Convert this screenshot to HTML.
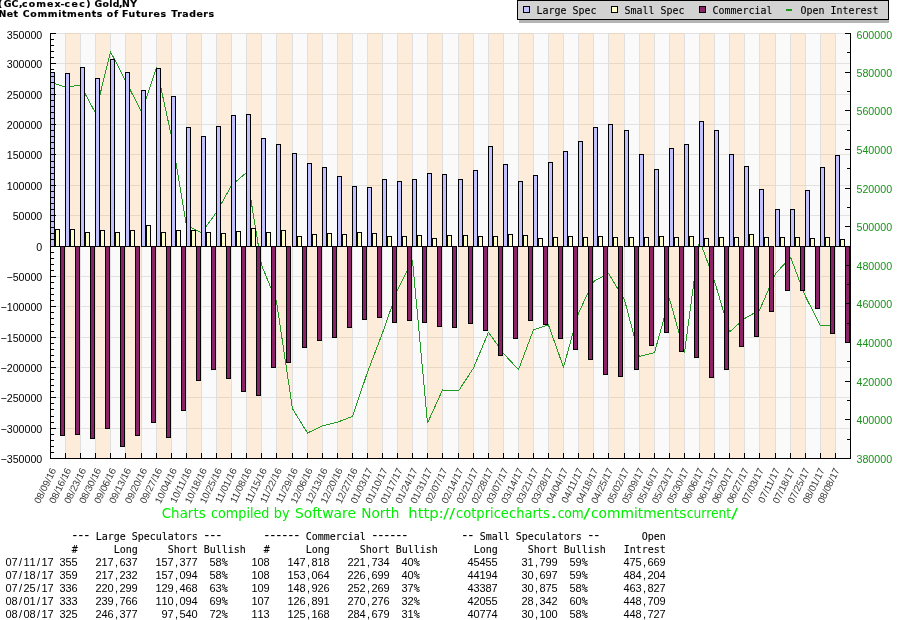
<!DOCTYPE html>
<html lang="en"><head><meta charset="utf-8"><title>Net Commitments of Futures Traders - Gold</title>
<style>
html,body{margin:0;padding:0;background:#fff;}
body{width:900px;height:620px;overflow:hidden;}
svg{display:block;will-change:transform;}
.ce{shape-rendering:crispEdges;}
.ax{font-family:"Liberation Sans",Arial,sans-serif;font-size:10.67px;fill:#000;}
.rx{font-family:"Liberation Sans",Arial,sans-serif;font-size:10.67px;fill:#189218;}
.xl{font-family:"Liberation Sans",Arial,sans-serif;font-size:9.8px;fill:#333333;}
.tt{font-family:"DejaVu Sans","Liberation Sans",sans-serif;font-weight:bold;font-size:8.0px;fill:#000;}
.lg{font-family:"DejaVu Sans Mono","Liberation Mono",monospace;font-size:10px;fill:#000;}
.tb{font-family:"DejaVu Sans Mono","Liberation Mono",monospace;font-size:10px;fill:#000;white-space:pre;}
.tn{font-family:"Liberation Sans",Arial,sans-serif;font-size:11px;}
.tm{font-family:"DejaVu Sans Mono","Liberation Mono",monospace;font-size:10px;}
.td{font-family:"DejaVu Sans Mono","Liberation Mono",monospace;font-size:13.5px;}
.tm,.lg{stroke:#000;stroke-width:0.1;}
.tt{stroke:#000;stroke-width:0.15;}
.ft{font-family:"DejaVu Sans","Liberation Sans",sans-serif;font-size:13.33px;fill:#00ee00;}
</style></head><body>
<svg width="900" height="620" viewBox="0 0 900 620">
<rect x="0" y="0" width="900" height="620" fill="#ffffff"/>
<g class="ce">
<rect x="50" y="33" width="15" height="425" fill="#fafafa"/>
<rect x="65" y="33" width="15" height="425" fill="#fdecd9"/>
<rect x="80" y="33" width="15" height="425" fill="#fafafa"/>
<rect x="95" y="33" width="15" height="425" fill="#fdecd9"/>
<rect x="110" y="33" width="15" height="425" fill="#fafafa"/>
<rect x="125" y="33" width="16" height="425" fill="#fdecd9"/>
<rect x="141" y="33" width="15" height="425" fill="#fafafa"/>
<rect x="156" y="33" width="15" height="425" fill="#fdecd9"/>
<rect x="171" y="33" width="15" height="425" fill="#fafafa"/>
<rect x="186" y="33" width="15" height="425" fill="#fdecd9"/>
<rect x="201" y="33" width="15" height="425" fill="#fafafa"/>
<rect x="216" y="33" width="15" height="425" fill="#fdecd9"/>
<rect x="231" y="33" width="15" height="425" fill="#fafafa"/>
<rect x="246" y="33" width="15" height="425" fill="#fdecd9"/>
<rect x="261" y="33" width="15" height="425" fill="#fafafa"/>
<rect x="276" y="33" width="16" height="425" fill="#fdecd9"/>
<rect x="292" y="33" width="15" height="425" fill="#fafafa"/>
<rect x="307" y="33" width="15" height="425" fill="#fdecd9"/>
<rect x="322" y="33" width="15" height="425" fill="#fafafa"/>
<rect x="337" y="33" width="15" height="425" fill="#fdecd9"/>
<rect x="352" y="33" width="15" height="425" fill="#fafafa"/>
<rect x="367" y="33" width="15" height="425" fill="#fdecd9"/>
<rect x="382" y="33" width="15" height="425" fill="#fafafa"/>
<rect x="397" y="33" width="15" height="425" fill="#fdecd9"/>
<rect x="412" y="33" width="15" height="425" fill="#fafafa"/>
<rect x="427" y="33" width="15" height="425" fill="#fdecd9"/>
<rect x="442" y="33" width="16" height="425" fill="#fafafa"/>
<rect x="458" y="33" width="15" height="425" fill="#fdecd9"/>
<rect x="473" y="33" width="15" height="425" fill="#fafafa"/>
<rect x="488" y="33" width="15" height="425" fill="#fdecd9"/>
<rect x="503" y="33" width="15" height="425" fill="#fafafa"/>
<rect x="518" y="33" width="15" height="425" fill="#fdecd9"/>
<rect x="533" y="33" width="15" height="425" fill="#fafafa"/>
<rect x="548" y="33" width="15" height="425" fill="#fdecd9"/>
<rect x="563" y="33" width="15" height="425" fill="#fafafa"/>
<rect x="578" y="33" width="15" height="425" fill="#fdecd9"/>
<rect x="593" y="33" width="15" height="425" fill="#fafafa"/>
<rect x="608" y="33" width="16" height="425" fill="#fdecd9"/>
<rect x="624" y="33" width="15" height="425" fill="#fafafa"/>
<rect x="639" y="33" width="15" height="425" fill="#fdecd9"/>
<rect x="654" y="33" width="15" height="425" fill="#fafafa"/>
<rect x="669" y="33" width="15" height="425" fill="#fdecd9"/>
<rect x="684" y="33" width="15" height="425" fill="#fafafa"/>
<rect x="699" y="33" width="15" height="425" fill="#fdecd9"/>
<rect x="714" y="33" width="15" height="425" fill="#fafafa"/>
<rect x="729" y="33" width="15" height="425" fill="#fdecd9"/>
<rect x="744" y="33" width="15" height="425" fill="#fafafa"/>
<rect x="759" y="33" width="16" height="425" fill="#fdecd9"/>
<rect x="775" y="33" width="15" height="425" fill="#fafafa"/>
<rect x="790" y="33" width="15" height="425" fill="#fdecd9"/>
<rect x="805" y="33" width="15" height="425" fill="#fafafa"/>
<rect x="820" y="33" width="15" height="425" fill="#fdecd9"/>
<rect x="835" y="33" width="15" height="425" fill="#fafafa"/>
<rect x="50" y="33" width="15" height="1" fill="#e2e2e2"/>
<rect x="65" y="33" width="15" height="1" fill="#e8d7c2"/>
<rect x="80" y="33" width="15" height="1" fill="#e2e2e2"/>
<rect x="95" y="33" width="15" height="1" fill="#e8d7c2"/>
<rect x="110" y="33" width="15" height="1" fill="#e2e2e2"/>
<rect x="125" y="33" width="16" height="1" fill="#e8d7c2"/>
<rect x="141" y="33" width="15" height="1" fill="#e2e2e2"/>
<rect x="156" y="33" width="15" height="1" fill="#e8d7c2"/>
<rect x="171" y="33" width="15" height="1" fill="#e2e2e2"/>
<rect x="186" y="33" width="15" height="1" fill="#e8d7c2"/>
<rect x="201" y="33" width="15" height="1" fill="#e2e2e2"/>
<rect x="216" y="33" width="15" height="1" fill="#e8d7c2"/>
<rect x="231" y="33" width="15" height="1" fill="#e2e2e2"/>
<rect x="246" y="33" width="15" height="1" fill="#e8d7c2"/>
<rect x="261" y="33" width="15" height="1" fill="#e2e2e2"/>
<rect x="276" y="33" width="16" height="1" fill="#e8d7c2"/>
<rect x="292" y="33" width="15" height="1" fill="#e2e2e2"/>
<rect x="307" y="33" width="15" height="1" fill="#e8d7c2"/>
<rect x="322" y="33" width="15" height="1" fill="#e2e2e2"/>
<rect x="337" y="33" width="15" height="1" fill="#e8d7c2"/>
<rect x="352" y="33" width="15" height="1" fill="#e2e2e2"/>
<rect x="367" y="33" width="15" height="1" fill="#e8d7c2"/>
<rect x="382" y="33" width="15" height="1" fill="#e2e2e2"/>
<rect x="397" y="33" width="15" height="1" fill="#e8d7c2"/>
<rect x="412" y="33" width="15" height="1" fill="#e2e2e2"/>
<rect x="427" y="33" width="15" height="1" fill="#e8d7c2"/>
<rect x="442" y="33" width="16" height="1" fill="#e2e2e2"/>
<rect x="458" y="33" width="15" height="1" fill="#e8d7c2"/>
<rect x="473" y="33" width="15" height="1" fill="#e2e2e2"/>
<rect x="488" y="33" width="15" height="1" fill="#e8d7c2"/>
<rect x="503" y="33" width="15" height="1" fill="#e2e2e2"/>
<rect x="518" y="33" width="15" height="1" fill="#e8d7c2"/>
<rect x="533" y="33" width="15" height="1" fill="#e2e2e2"/>
<rect x="548" y="33" width="15" height="1" fill="#e8d7c2"/>
<rect x="563" y="33" width="15" height="1" fill="#e2e2e2"/>
<rect x="578" y="33" width="15" height="1" fill="#e8d7c2"/>
<rect x="593" y="33" width="15" height="1" fill="#e2e2e2"/>
<rect x="608" y="33" width="16" height="1" fill="#e8d7c2"/>
<rect x="624" y="33" width="15" height="1" fill="#e2e2e2"/>
<rect x="639" y="33" width="15" height="1" fill="#e8d7c2"/>
<rect x="654" y="33" width="15" height="1" fill="#e2e2e2"/>
<rect x="669" y="33" width="15" height="1" fill="#e8d7c2"/>
<rect x="684" y="33" width="15" height="1" fill="#e2e2e2"/>
<rect x="699" y="33" width="15" height="1" fill="#e8d7c2"/>
<rect x="714" y="33" width="15" height="1" fill="#e2e2e2"/>
<rect x="729" y="33" width="15" height="1" fill="#e8d7c2"/>
<rect x="744" y="33" width="15" height="1" fill="#e2e2e2"/>
<rect x="759" y="33" width="16" height="1" fill="#e8d7c2"/>
<rect x="775" y="33" width="15" height="1" fill="#e2e2e2"/>
<rect x="790" y="33" width="15" height="1" fill="#e8d7c2"/>
<rect x="805" y="33" width="15" height="1" fill="#e2e2e2"/>
<rect x="820" y="33" width="15" height="1" fill="#e8d7c2"/>
<rect x="835" y="33" width="15" height="1" fill="#e2e2e2"/>
<rect x="50" y="63" width="15" height="1" fill="#e2e2e2"/>
<rect x="65" y="63" width="15" height="1" fill="#e8d7c2"/>
<rect x="80" y="63" width="15" height="1" fill="#e2e2e2"/>
<rect x="95" y="63" width="15" height="1" fill="#e8d7c2"/>
<rect x="110" y="63" width="15" height="1" fill="#e2e2e2"/>
<rect x="125" y="63" width="16" height="1" fill="#e8d7c2"/>
<rect x="141" y="63" width="15" height="1" fill="#e2e2e2"/>
<rect x="156" y="63" width="15" height="1" fill="#e8d7c2"/>
<rect x="171" y="63" width="15" height="1" fill="#e2e2e2"/>
<rect x="186" y="63" width="15" height="1" fill="#e8d7c2"/>
<rect x="201" y="63" width="15" height="1" fill="#e2e2e2"/>
<rect x="216" y="63" width="15" height="1" fill="#e8d7c2"/>
<rect x="231" y="63" width="15" height="1" fill="#e2e2e2"/>
<rect x="246" y="63" width="15" height="1" fill="#e8d7c2"/>
<rect x="261" y="63" width="15" height="1" fill="#e2e2e2"/>
<rect x="276" y="63" width="16" height="1" fill="#e8d7c2"/>
<rect x="292" y="63" width="15" height="1" fill="#e2e2e2"/>
<rect x="307" y="63" width="15" height="1" fill="#e8d7c2"/>
<rect x="322" y="63" width="15" height="1" fill="#e2e2e2"/>
<rect x="337" y="63" width="15" height="1" fill="#e8d7c2"/>
<rect x="352" y="63" width="15" height="1" fill="#e2e2e2"/>
<rect x="367" y="63" width="15" height="1" fill="#e8d7c2"/>
<rect x="382" y="63" width="15" height="1" fill="#e2e2e2"/>
<rect x="397" y="63" width="15" height="1" fill="#e8d7c2"/>
<rect x="412" y="63" width="15" height="1" fill="#e2e2e2"/>
<rect x="427" y="63" width="15" height="1" fill="#e8d7c2"/>
<rect x="442" y="63" width="16" height="1" fill="#e2e2e2"/>
<rect x="458" y="63" width="15" height="1" fill="#e8d7c2"/>
<rect x="473" y="63" width="15" height="1" fill="#e2e2e2"/>
<rect x="488" y="63" width="15" height="1" fill="#e8d7c2"/>
<rect x="503" y="63" width="15" height="1" fill="#e2e2e2"/>
<rect x="518" y="63" width="15" height="1" fill="#e8d7c2"/>
<rect x="533" y="63" width="15" height="1" fill="#e2e2e2"/>
<rect x="548" y="63" width="15" height="1" fill="#e8d7c2"/>
<rect x="563" y="63" width="15" height="1" fill="#e2e2e2"/>
<rect x="578" y="63" width="15" height="1" fill="#e8d7c2"/>
<rect x="593" y="63" width="15" height="1" fill="#e2e2e2"/>
<rect x="608" y="63" width="16" height="1" fill="#e8d7c2"/>
<rect x="624" y="63" width="15" height="1" fill="#e2e2e2"/>
<rect x="639" y="63" width="15" height="1" fill="#e8d7c2"/>
<rect x="654" y="63" width="15" height="1" fill="#e2e2e2"/>
<rect x="669" y="63" width="15" height="1" fill="#e8d7c2"/>
<rect x="684" y="63" width="15" height="1" fill="#e2e2e2"/>
<rect x="699" y="63" width="15" height="1" fill="#e8d7c2"/>
<rect x="714" y="63" width="15" height="1" fill="#e2e2e2"/>
<rect x="729" y="63" width="15" height="1" fill="#e8d7c2"/>
<rect x="744" y="63" width="15" height="1" fill="#e2e2e2"/>
<rect x="759" y="63" width="16" height="1" fill="#e8d7c2"/>
<rect x="775" y="63" width="15" height="1" fill="#e2e2e2"/>
<rect x="790" y="63" width="15" height="1" fill="#e8d7c2"/>
<rect x="805" y="63" width="15" height="1" fill="#e2e2e2"/>
<rect x="820" y="63" width="15" height="1" fill="#e8d7c2"/>
<rect x="835" y="63" width="15" height="1" fill="#e2e2e2"/>
<rect x="50" y="94" width="15" height="1" fill="#e2e2e2"/>
<rect x="65" y="94" width="15" height="1" fill="#e8d7c2"/>
<rect x="80" y="94" width="15" height="1" fill="#e2e2e2"/>
<rect x="95" y="94" width="15" height="1" fill="#e8d7c2"/>
<rect x="110" y="94" width="15" height="1" fill="#e2e2e2"/>
<rect x="125" y="94" width="16" height="1" fill="#e8d7c2"/>
<rect x="141" y="94" width="15" height="1" fill="#e2e2e2"/>
<rect x="156" y="94" width="15" height="1" fill="#e8d7c2"/>
<rect x="171" y="94" width="15" height="1" fill="#e2e2e2"/>
<rect x="186" y="94" width="15" height="1" fill="#e8d7c2"/>
<rect x="201" y="94" width="15" height="1" fill="#e2e2e2"/>
<rect x="216" y="94" width="15" height="1" fill="#e8d7c2"/>
<rect x="231" y="94" width="15" height="1" fill="#e2e2e2"/>
<rect x="246" y="94" width="15" height="1" fill="#e8d7c2"/>
<rect x="261" y="94" width="15" height="1" fill="#e2e2e2"/>
<rect x="276" y="94" width="16" height="1" fill="#e8d7c2"/>
<rect x="292" y="94" width="15" height="1" fill="#e2e2e2"/>
<rect x="307" y="94" width="15" height="1" fill="#e8d7c2"/>
<rect x="322" y="94" width="15" height="1" fill="#e2e2e2"/>
<rect x="337" y="94" width="15" height="1" fill="#e8d7c2"/>
<rect x="352" y="94" width="15" height="1" fill="#e2e2e2"/>
<rect x="367" y="94" width="15" height="1" fill="#e8d7c2"/>
<rect x="382" y="94" width="15" height="1" fill="#e2e2e2"/>
<rect x="397" y="94" width="15" height="1" fill="#e8d7c2"/>
<rect x="412" y="94" width="15" height="1" fill="#e2e2e2"/>
<rect x="427" y="94" width="15" height="1" fill="#e8d7c2"/>
<rect x="442" y="94" width="16" height="1" fill="#e2e2e2"/>
<rect x="458" y="94" width="15" height="1" fill="#e8d7c2"/>
<rect x="473" y="94" width="15" height="1" fill="#e2e2e2"/>
<rect x="488" y="94" width="15" height="1" fill="#e8d7c2"/>
<rect x="503" y="94" width="15" height="1" fill="#e2e2e2"/>
<rect x="518" y="94" width="15" height="1" fill="#e8d7c2"/>
<rect x="533" y="94" width="15" height="1" fill="#e2e2e2"/>
<rect x="548" y="94" width="15" height="1" fill="#e8d7c2"/>
<rect x="563" y="94" width="15" height="1" fill="#e2e2e2"/>
<rect x="578" y="94" width="15" height="1" fill="#e8d7c2"/>
<rect x="593" y="94" width="15" height="1" fill="#e2e2e2"/>
<rect x="608" y="94" width="16" height="1" fill="#e8d7c2"/>
<rect x="624" y="94" width="15" height="1" fill="#e2e2e2"/>
<rect x="639" y="94" width="15" height="1" fill="#e8d7c2"/>
<rect x="654" y="94" width="15" height="1" fill="#e2e2e2"/>
<rect x="669" y="94" width="15" height="1" fill="#e8d7c2"/>
<rect x="684" y="94" width="15" height="1" fill="#e2e2e2"/>
<rect x="699" y="94" width="15" height="1" fill="#e8d7c2"/>
<rect x="714" y="94" width="15" height="1" fill="#e2e2e2"/>
<rect x="729" y="94" width="15" height="1" fill="#e8d7c2"/>
<rect x="744" y="94" width="15" height="1" fill="#e2e2e2"/>
<rect x="759" y="94" width="16" height="1" fill="#e8d7c2"/>
<rect x="775" y="94" width="15" height="1" fill="#e2e2e2"/>
<rect x="790" y="94" width="15" height="1" fill="#e8d7c2"/>
<rect x="805" y="94" width="15" height="1" fill="#e2e2e2"/>
<rect x="820" y="94" width="15" height="1" fill="#e8d7c2"/>
<rect x="835" y="94" width="15" height="1" fill="#e2e2e2"/>
<rect x="50" y="124" width="15" height="1" fill="#e2e2e2"/>
<rect x="65" y="124" width="15" height="1" fill="#e8d7c2"/>
<rect x="80" y="124" width="15" height="1" fill="#e2e2e2"/>
<rect x="95" y="124" width="15" height="1" fill="#e8d7c2"/>
<rect x="110" y="124" width="15" height="1" fill="#e2e2e2"/>
<rect x="125" y="124" width="16" height="1" fill="#e8d7c2"/>
<rect x="141" y="124" width="15" height="1" fill="#e2e2e2"/>
<rect x="156" y="124" width="15" height="1" fill="#e8d7c2"/>
<rect x="171" y="124" width="15" height="1" fill="#e2e2e2"/>
<rect x="186" y="124" width="15" height="1" fill="#e8d7c2"/>
<rect x="201" y="124" width="15" height="1" fill="#e2e2e2"/>
<rect x="216" y="124" width="15" height="1" fill="#e8d7c2"/>
<rect x="231" y="124" width="15" height="1" fill="#e2e2e2"/>
<rect x="246" y="124" width="15" height="1" fill="#e8d7c2"/>
<rect x="261" y="124" width="15" height="1" fill="#e2e2e2"/>
<rect x="276" y="124" width="16" height="1" fill="#e8d7c2"/>
<rect x="292" y="124" width="15" height="1" fill="#e2e2e2"/>
<rect x="307" y="124" width="15" height="1" fill="#e8d7c2"/>
<rect x="322" y="124" width="15" height="1" fill="#e2e2e2"/>
<rect x="337" y="124" width="15" height="1" fill="#e8d7c2"/>
<rect x="352" y="124" width="15" height="1" fill="#e2e2e2"/>
<rect x="367" y="124" width="15" height="1" fill="#e8d7c2"/>
<rect x="382" y="124" width="15" height="1" fill="#e2e2e2"/>
<rect x="397" y="124" width="15" height="1" fill="#e8d7c2"/>
<rect x="412" y="124" width="15" height="1" fill="#e2e2e2"/>
<rect x="427" y="124" width="15" height="1" fill="#e8d7c2"/>
<rect x="442" y="124" width="16" height="1" fill="#e2e2e2"/>
<rect x="458" y="124" width="15" height="1" fill="#e8d7c2"/>
<rect x="473" y="124" width="15" height="1" fill="#e2e2e2"/>
<rect x="488" y="124" width="15" height="1" fill="#e8d7c2"/>
<rect x="503" y="124" width="15" height="1" fill="#e2e2e2"/>
<rect x="518" y="124" width="15" height="1" fill="#e8d7c2"/>
<rect x="533" y="124" width="15" height="1" fill="#e2e2e2"/>
<rect x="548" y="124" width="15" height="1" fill="#e8d7c2"/>
<rect x="563" y="124" width="15" height="1" fill="#e2e2e2"/>
<rect x="578" y="124" width="15" height="1" fill="#e8d7c2"/>
<rect x="593" y="124" width="15" height="1" fill="#e2e2e2"/>
<rect x="608" y="124" width="16" height="1" fill="#e8d7c2"/>
<rect x="624" y="124" width="15" height="1" fill="#e2e2e2"/>
<rect x="639" y="124" width="15" height="1" fill="#e8d7c2"/>
<rect x="654" y="124" width="15" height="1" fill="#e2e2e2"/>
<rect x="669" y="124" width="15" height="1" fill="#e8d7c2"/>
<rect x="684" y="124" width="15" height="1" fill="#e2e2e2"/>
<rect x="699" y="124" width="15" height="1" fill="#e8d7c2"/>
<rect x="714" y="124" width="15" height="1" fill="#e2e2e2"/>
<rect x="729" y="124" width="15" height="1" fill="#e8d7c2"/>
<rect x="744" y="124" width="15" height="1" fill="#e2e2e2"/>
<rect x="759" y="124" width="16" height="1" fill="#e8d7c2"/>
<rect x="775" y="124" width="15" height="1" fill="#e2e2e2"/>
<rect x="790" y="124" width="15" height="1" fill="#e8d7c2"/>
<rect x="805" y="124" width="15" height="1" fill="#e2e2e2"/>
<rect x="820" y="124" width="15" height="1" fill="#e8d7c2"/>
<rect x="835" y="124" width="15" height="1" fill="#e2e2e2"/>
<rect x="50" y="154" width="15" height="1" fill="#e2e2e2"/>
<rect x="65" y="154" width="15" height="1" fill="#e8d7c2"/>
<rect x="80" y="154" width="15" height="1" fill="#e2e2e2"/>
<rect x="95" y="154" width="15" height="1" fill="#e8d7c2"/>
<rect x="110" y="154" width="15" height="1" fill="#e2e2e2"/>
<rect x="125" y="154" width="16" height="1" fill="#e8d7c2"/>
<rect x="141" y="154" width="15" height="1" fill="#e2e2e2"/>
<rect x="156" y="154" width="15" height="1" fill="#e8d7c2"/>
<rect x="171" y="154" width="15" height="1" fill="#e2e2e2"/>
<rect x="186" y="154" width="15" height="1" fill="#e8d7c2"/>
<rect x="201" y="154" width="15" height="1" fill="#e2e2e2"/>
<rect x="216" y="154" width="15" height="1" fill="#e8d7c2"/>
<rect x="231" y="154" width="15" height="1" fill="#e2e2e2"/>
<rect x="246" y="154" width="15" height="1" fill="#e8d7c2"/>
<rect x="261" y="154" width="15" height="1" fill="#e2e2e2"/>
<rect x="276" y="154" width="16" height="1" fill="#e8d7c2"/>
<rect x="292" y="154" width="15" height="1" fill="#e2e2e2"/>
<rect x="307" y="154" width="15" height="1" fill="#e8d7c2"/>
<rect x="322" y="154" width="15" height="1" fill="#e2e2e2"/>
<rect x="337" y="154" width="15" height="1" fill="#e8d7c2"/>
<rect x="352" y="154" width="15" height="1" fill="#e2e2e2"/>
<rect x="367" y="154" width="15" height="1" fill="#e8d7c2"/>
<rect x="382" y="154" width="15" height="1" fill="#e2e2e2"/>
<rect x="397" y="154" width="15" height="1" fill="#e8d7c2"/>
<rect x="412" y="154" width="15" height="1" fill="#e2e2e2"/>
<rect x="427" y="154" width="15" height="1" fill="#e8d7c2"/>
<rect x="442" y="154" width="16" height="1" fill="#e2e2e2"/>
<rect x="458" y="154" width="15" height="1" fill="#e8d7c2"/>
<rect x="473" y="154" width="15" height="1" fill="#e2e2e2"/>
<rect x="488" y="154" width="15" height="1" fill="#e8d7c2"/>
<rect x="503" y="154" width="15" height="1" fill="#e2e2e2"/>
<rect x="518" y="154" width="15" height="1" fill="#e8d7c2"/>
<rect x="533" y="154" width="15" height="1" fill="#e2e2e2"/>
<rect x="548" y="154" width="15" height="1" fill="#e8d7c2"/>
<rect x="563" y="154" width="15" height="1" fill="#e2e2e2"/>
<rect x="578" y="154" width="15" height="1" fill="#e8d7c2"/>
<rect x="593" y="154" width="15" height="1" fill="#e2e2e2"/>
<rect x="608" y="154" width="16" height="1" fill="#e8d7c2"/>
<rect x="624" y="154" width="15" height="1" fill="#e2e2e2"/>
<rect x="639" y="154" width="15" height="1" fill="#e8d7c2"/>
<rect x="654" y="154" width="15" height="1" fill="#e2e2e2"/>
<rect x="669" y="154" width="15" height="1" fill="#e8d7c2"/>
<rect x="684" y="154" width="15" height="1" fill="#e2e2e2"/>
<rect x="699" y="154" width="15" height="1" fill="#e8d7c2"/>
<rect x="714" y="154" width="15" height="1" fill="#e2e2e2"/>
<rect x="729" y="154" width="15" height="1" fill="#e8d7c2"/>
<rect x="744" y="154" width="15" height="1" fill="#e2e2e2"/>
<rect x="759" y="154" width="16" height="1" fill="#e8d7c2"/>
<rect x="775" y="154" width="15" height="1" fill="#e2e2e2"/>
<rect x="790" y="154" width="15" height="1" fill="#e8d7c2"/>
<rect x="805" y="154" width="15" height="1" fill="#e2e2e2"/>
<rect x="820" y="154" width="15" height="1" fill="#e8d7c2"/>
<rect x="835" y="154" width="15" height="1" fill="#e2e2e2"/>
<rect x="50" y="185" width="15" height="1" fill="#e2e2e2"/>
<rect x="65" y="185" width="15" height="1" fill="#e8d7c2"/>
<rect x="80" y="185" width="15" height="1" fill="#e2e2e2"/>
<rect x="95" y="185" width="15" height="1" fill="#e8d7c2"/>
<rect x="110" y="185" width="15" height="1" fill="#e2e2e2"/>
<rect x="125" y="185" width="16" height="1" fill="#e8d7c2"/>
<rect x="141" y="185" width="15" height="1" fill="#e2e2e2"/>
<rect x="156" y="185" width="15" height="1" fill="#e8d7c2"/>
<rect x="171" y="185" width="15" height="1" fill="#e2e2e2"/>
<rect x="186" y="185" width="15" height="1" fill="#e8d7c2"/>
<rect x="201" y="185" width="15" height="1" fill="#e2e2e2"/>
<rect x="216" y="185" width="15" height="1" fill="#e8d7c2"/>
<rect x="231" y="185" width="15" height="1" fill="#e2e2e2"/>
<rect x="246" y="185" width="15" height="1" fill="#e8d7c2"/>
<rect x="261" y="185" width="15" height="1" fill="#e2e2e2"/>
<rect x="276" y="185" width="16" height="1" fill="#e8d7c2"/>
<rect x="292" y="185" width="15" height="1" fill="#e2e2e2"/>
<rect x="307" y="185" width="15" height="1" fill="#e8d7c2"/>
<rect x="322" y="185" width="15" height="1" fill="#e2e2e2"/>
<rect x="337" y="185" width="15" height="1" fill="#e8d7c2"/>
<rect x="352" y="185" width="15" height="1" fill="#e2e2e2"/>
<rect x="367" y="185" width="15" height="1" fill="#e8d7c2"/>
<rect x="382" y="185" width="15" height="1" fill="#e2e2e2"/>
<rect x="397" y="185" width="15" height="1" fill="#e8d7c2"/>
<rect x="412" y="185" width="15" height="1" fill="#e2e2e2"/>
<rect x="427" y="185" width="15" height="1" fill="#e8d7c2"/>
<rect x="442" y="185" width="16" height="1" fill="#e2e2e2"/>
<rect x="458" y="185" width="15" height="1" fill="#e8d7c2"/>
<rect x="473" y="185" width="15" height="1" fill="#e2e2e2"/>
<rect x="488" y="185" width="15" height="1" fill="#e8d7c2"/>
<rect x="503" y="185" width="15" height="1" fill="#e2e2e2"/>
<rect x="518" y="185" width="15" height="1" fill="#e8d7c2"/>
<rect x="533" y="185" width="15" height="1" fill="#e2e2e2"/>
<rect x="548" y="185" width="15" height="1" fill="#e8d7c2"/>
<rect x="563" y="185" width="15" height="1" fill="#e2e2e2"/>
<rect x="578" y="185" width="15" height="1" fill="#e8d7c2"/>
<rect x="593" y="185" width="15" height="1" fill="#e2e2e2"/>
<rect x="608" y="185" width="16" height="1" fill="#e8d7c2"/>
<rect x="624" y="185" width="15" height="1" fill="#e2e2e2"/>
<rect x="639" y="185" width="15" height="1" fill="#e8d7c2"/>
<rect x="654" y="185" width="15" height="1" fill="#e2e2e2"/>
<rect x="669" y="185" width="15" height="1" fill="#e8d7c2"/>
<rect x="684" y="185" width="15" height="1" fill="#e2e2e2"/>
<rect x="699" y="185" width="15" height="1" fill="#e8d7c2"/>
<rect x="714" y="185" width="15" height="1" fill="#e2e2e2"/>
<rect x="729" y="185" width="15" height="1" fill="#e8d7c2"/>
<rect x="744" y="185" width="15" height="1" fill="#e2e2e2"/>
<rect x="759" y="185" width="16" height="1" fill="#e8d7c2"/>
<rect x="775" y="185" width="15" height="1" fill="#e2e2e2"/>
<rect x="790" y="185" width="15" height="1" fill="#e8d7c2"/>
<rect x="805" y="185" width="15" height="1" fill="#e2e2e2"/>
<rect x="820" y="185" width="15" height="1" fill="#e8d7c2"/>
<rect x="835" y="185" width="15" height="1" fill="#e2e2e2"/>
<rect x="50" y="215" width="15" height="1" fill="#e2e2e2"/>
<rect x="65" y="215" width="15" height="1" fill="#e8d7c2"/>
<rect x="80" y="215" width="15" height="1" fill="#e2e2e2"/>
<rect x="95" y="215" width="15" height="1" fill="#e8d7c2"/>
<rect x="110" y="215" width="15" height="1" fill="#e2e2e2"/>
<rect x="125" y="215" width="16" height="1" fill="#e8d7c2"/>
<rect x="141" y="215" width="15" height="1" fill="#e2e2e2"/>
<rect x="156" y="215" width="15" height="1" fill="#e8d7c2"/>
<rect x="171" y="215" width="15" height="1" fill="#e2e2e2"/>
<rect x="186" y="215" width="15" height="1" fill="#e8d7c2"/>
<rect x="201" y="215" width="15" height="1" fill="#e2e2e2"/>
<rect x="216" y="215" width="15" height="1" fill="#e8d7c2"/>
<rect x="231" y="215" width="15" height="1" fill="#e2e2e2"/>
<rect x="246" y="215" width="15" height="1" fill="#e8d7c2"/>
<rect x="261" y="215" width="15" height="1" fill="#e2e2e2"/>
<rect x="276" y="215" width="16" height="1" fill="#e8d7c2"/>
<rect x="292" y="215" width="15" height="1" fill="#e2e2e2"/>
<rect x="307" y="215" width="15" height="1" fill="#e8d7c2"/>
<rect x="322" y="215" width="15" height="1" fill="#e2e2e2"/>
<rect x="337" y="215" width="15" height="1" fill="#e8d7c2"/>
<rect x="352" y="215" width="15" height="1" fill="#e2e2e2"/>
<rect x="367" y="215" width="15" height="1" fill="#e8d7c2"/>
<rect x="382" y="215" width="15" height="1" fill="#e2e2e2"/>
<rect x="397" y="215" width="15" height="1" fill="#e8d7c2"/>
<rect x="412" y="215" width="15" height="1" fill="#e2e2e2"/>
<rect x="427" y="215" width="15" height="1" fill="#e8d7c2"/>
<rect x="442" y="215" width="16" height="1" fill="#e2e2e2"/>
<rect x="458" y="215" width="15" height="1" fill="#e8d7c2"/>
<rect x="473" y="215" width="15" height="1" fill="#e2e2e2"/>
<rect x="488" y="215" width="15" height="1" fill="#e8d7c2"/>
<rect x="503" y="215" width="15" height="1" fill="#e2e2e2"/>
<rect x="518" y="215" width="15" height="1" fill="#e8d7c2"/>
<rect x="533" y="215" width="15" height="1" fill="#e2e2e2"/>
<rect x="548" y="215" width="15" height="1" fill="#e8d7c2"/>
<rect x="563" y="215" width="15" height="1" fill="#e2e2e2"/>
<rect x="578" y="215" width="15" height="1" fill="#e8d7c2"/>
<rect x="593" y="215" width="15" height="1" fill="#e2e2e2"/>
<rect x="608" y="215" width="16" height="1" fill="#e8d7c2"/>
<rect x="624" y="215" width="15" height="1" fill="#e2e2e2"/>
<rect x="639" y="215" width="15" height="1" fill="#e8d7c2"/>
<rect x="654" y="215" width="15" height="1" fill="#e2e2e2"/>
<rect x="669" y="215" width="15" height="1" fill="#e8d7c2"/>
<rect x="684" y="215" width="15" height="1" fill="#e2e2e2"/>
<rect x="699" y="215" width="15" height="1" fill="#e8d7c2"/>
<rect x="714" y="215" width="15" height="1" fill="#e2e2e2"/>
<rect x="729" y="215" width="15" height="1" fill="#e8d7c2"/>
<rect x="744" y="215" width="15" height="1" fill="#e2e2e2"/>
<rect x="759" y="215" width="16" height="1" fill="#e8d7c2"/>
<rect x="775" y="215" width="15" height="1" fill="#e2e2e2"/>
<rect x="790" y="215" width="15" height="1" fill="#e8d7c2"/>
<rect x="805" y="215" width="15" height="1" fill="#e2e2e2"/>
<rect x="820" y="215" width="15" height="1" fill="#e8d7c2"/>
<rect x="835" y="215" width="15" height="1" fill="#e2e2e2"/>
<rect x="50" y="246" width="15" height="1" fill="#e2e2e2"/>
<rect x="65" y="246" width="15" height="1" fill="#e8d7c2"/>
<rect x="80" y="246" width="15" height="1" fill="#e2e2e2"/>
<rect x="95" y="246" width="15" height="1" fill="#e8d7c2"/>
<rect x="110" y="246" width="15" height="1" fill="#e2e2e2"/>
<rect x="125" y="246" width="16" height="1" fill="#e8d7c2"/>
<rect x="141" y="246" width="15" height="1" fill="#e2e2e2"/>
<rect x="156" y="246" width="15" height="1" fill="#e8d7c2"/>
<rect x="171" y="246" width="15" height="1" fill="#e2e2e2"/>
<rect x="186" y="246" width="15" height="1" fill="#e8d7c2"/>
<rect x="201" y="246" width="15" height="1" fill="#e2e2e2"/>
<rect x="216" y="246" width="15" height="1" fill="#e8d7c2"/>
<rect x="231" y="246" width="15" height="1" fill="#e2e2e2"/>
<rect x="246" y="246" width="15" height="1" fill="#e8d7c2"/>
<rect x="261" y="246" width="15" height="1" fill="#e2e2e2"/>
<rect x="276" y="246" width="16" height="1" fill="#e8d7c2"/>
<rect x="292" y="246" width="15" height="1" fill="#e2e2e2"/>
<rect x="307" y="246" width="15" height="1" fill="#e8d7c2"/>
<rect x="322" y="246" width="15" height="1" fill="#e2e2e2"/>
<rect x="337" y="246" width="15" height="1" fill="#e8d7c2"/>
<rect x="352" y="246" width="15" height="1" fill="#e2e2e2"/>
<rect x="367" y="246" width="15" height="1" fill="#e8d7c2"/>
<rect x="382" y="246" width="15" height="1" fill="#e2e2e2"/>
<rect x="397" y="246" width="15" height="1" fill="#e8d7c2"/>
<rect x="412" y="246" width="15" height="1" fill="#e2e2e2"/>
<rect x="427" y="246" width="15" height="1" fill="#e8d7c2"/>
<rect x="442" y="246" width="16" height="1" fill="#e2e2e2"/>
<rect x="458" y="246" width="15" height="1" fill="#e8d7c2"/>
<rect x="473" y="246" width="15" height="1" fill="#e2e2e2"/>
<rect x="488" y="246" width="15" height="1" fill="#e8d7c2"/>
<rect x="503" y="246" width="15" height="1" fill="#e2e2e2"/>
<rect x="518" y="246" width="15" height="1" fill="#e8d7c2"/>
<rect x="533" y="246" width="15" height="1" fill="#e2e2e2"/>
<rect x="548" y="246" width="15" height="1" fill="#e8d7c2"/>
<rect x="563" y="246" width="15" height="1" fill="#e2e2e2"/>
<rect x="578" y="246" width="15" height="1" fill="#e8d7c2"/>
<rect x="593" y="246" width="15" height="1" fill="#e2e2e2"/>
<rect x="608" y="246" width="16" height="1" fill="#e8d7c2"/>
<rect x="624" y="246" width="15" height="1" fill="#e2e2e2"/>
<rect x="639" y="246" width="15" height="1" fill="#e8d7c2"/>
<rect x="654" y="246" width="15" height="1" fill="#e2e2e2"/>
<rect x="669" y="246" width="15" height="1" fill="#e8d7c2"/>
<rect x="684" y="246" width="15" height="1" fill="#e2e2e2"/>
<rect x="699" y="246" width="15" height="1" fill="#e8d7c2"/>
<rect x="714" y="246" width="15" height="1" fill="#e2e2e2"/>
<rect x="729" y="246" width="15" height="1" fill="#e8d7c2"/>
<rect x="744" y="246" width="15" height="1" fill="#e2e2e2"/>
<rect x="759" y="246" width="16" height="1" fill="#e8d7c2"/>
<rect x="775" y="246" width="15" height="1" fill="#e2e2e2"/>
<rect x="790" y="246" width="15" height="1" fill="#e8d7c2"/>
<rect x="805" y="246" width="15" height="1" fill="#e2e2e2"/>
<rect x="820" y="246" width="15" height="1" fill="#e8d7c2"/>
<rect x="835" y="246" width="15" height="1" fill="#e2e2e2"/>
<rect x="50" y="276" width="15" height="1" fill="#e2e2e2"/>
<rect x="65" y="276" width="15" height="1" fill="#e8d7c2"/>
<rect x="80" y="276" width="15" height="1" fill="#e2e2e2"/>
<rect x="95" y="276" width="15" height="1" fill="#e8d7c2"/>
<rect x="110" y="276" width="15" height="1" fill="#e2e2e2"/>
<rect x="125" y="276" width="16" height="1" fill="#e8d7c2"/>
<rect x="141" y="276" width="15" height="1" fill="#e2e2e2"/>
<rect x="156" y="276" width="15" height="1" fill="#e8d7c2"/>
<rect x="171" y="276" width="15" height="1" fill="#e2e2e2"/>
<rect x="186" y="276" width="15" height="1" fill="#e8d7c2"/>
<rect x="201" y="276" width="15" height="1" fill="#e2e2e2"/>
<rect x="216" y="276" width="15" height="1" fill="#e8d7c2"/>
<rect x="231" y="276" width="15" height="1" fill="#e2e2e2"/>
<rect x="246" y="276" width="15" height="1" fill="#e8d7c2"/>
<rect x="261" y="276" width="15" height="1" fill="#e2e2e2"/>
<rect x="276" y="276" width="16" height="1" fill="#e8d7c2"/>
<rect x="292" y="276" width="15" height="1" fill="#e2e2e2"/>
<rect x="307" y="276" width="15" height="1" fill="#e8d7c2"/>
<rect x="322" y="276" width="15" height="1" fill="#e2e2e2"/>
<rect x="337" y="276" width="15" height="1" fill="#e8d7c2"/>
<rect x="352" y="276" width="15" height="1" fill="#e2e2e2"/>
<rect x="367" y="276" width="15" height="1" fill="#e8d7c2"/>
<rect x="382" y="276" width="15" height="1" fill="#e2e2e2"/>
<rect x="397" y="276" width="15" height="1" fill="#e8d7c2"/>
<rect x="412" y="276" width="15" height="1" fill="#e2e2e2"/>
<rect x="427" y="276" width="15" height="1" fill="#e8d7c2"/>
<rect x="442" y="276" width="16" height="1" fill="#e2e2e2"/>
<rect x="458" y="276" width="15" height="1" fill="#e8d7c2"/>
<rect x="473" y="276" width="15" height="1" fill="#e2e2e2"/>
<rect x="488" y="276" width="15" height="1" fill="#e8d7c2"/>
<rect x="503" y="276" width="15" height="1" fill="#e2e2e2"/>
<rect x="518" y="276" width="15" height="1" fill="#e8d7c2"/>
<rect x="533" y="276" width="15" height="1" fill="#e2e2e2"/>
<rect x="548" y="276" width="15" height="1" fill="#e8d7c2"/>
<rect x="563" y="276" width="15" height="1" fill="#e2e2e2"/>
<rect x="578" y="276" width="15" height="1" fill="#e8d7c2"/>
<rect x="593" y="276" width="15" height="1" fill="#e2e2e2"/>
<rect x="608" y="276" width="16" height="1" fill="#e8d7c2"/>
<rect x="624" y="276" width="15" height="1" fill="#e2e2e2"/>
<rect x="639" y="276" width="15" height="1" fill="#e8d7c2"/>
<rect x="654" y="276" width="15" height="1" fill="#e2e2e2"/>
<rect x="669" y="276" width="15" height="1" fill="#e8d7c2"/>
<rect x="684" y="276" width="15" height="1" fill="#e2e2e2"/>
<rect x="699" y="276" width="15" height="1" fill="#e8d7c2"/>
<rect x="714" y="276" width="15" height="1" fill="#e2e2e2"/>
<rect x="729" y="276" width="15" height="1" fill="#e8d7c2"/>
<rect x="744" y="276" width="15" height="1" fill="#e2e2e2"/>
<rect x="759" y="276" width="16" height="1" fill="#e8d7c2"/>
<rect x="775" y="276" width="15" height="1" fill="#e2e2e2"/>
<rect x="790" y="276" width="15" height="1" fill="#e8d7c2"/>
<rect x="805" y="276" width="15" height="1" fill="#e2e2e2"/>
<rect x="820" y="276" width="15" height="1" fill="#e8d7c2"/>
<rect x="835" y="276" width="15" height="1" fill="#e2e2e2"/>
<rect x="50" y="306" width="15" height="1" fill="#e2e2e2"/>
<rect x="65" y="306" width="15" height="1" fill="#e8d7c2"/>
<rect x="80" y="306" width="15" height="1" fill="#e2e2e2"/>
<rect x="95" y="306" width="15" height="1" fill="#e8d7c2"/>
<rect x="110" y="306" width="15" height="1" fill="#e2e2e2"/>
<rect x="125" y="306" width="16" height="1" fill="#e8d7c2"/>
<rect x="141" y="306" width="15" height="1" fill="#e2e2e2"/>
<rect x="156" y="306" width="15" height="1" fill="#e8d7c2"/>
<rect x="171" y="306" width="15" height="1" fill="#e2e2e2"/>
<rect x="186" y="306" width="15" height="1" fill="#e8d7c2"/>
<rect x="201" y="306" width="15" height="1" fill="#e2e2e2"/>
<rect x="216" y="306" width="15" height="1" fill="#e8d7c2"/>
<rect x="231" y="306" width="15" height="1" fill="#e2e2e2"/>
<rect x="246" y="306" width="15" height="1" fill="#e8d7c2"/>
<rect x="261" y="306" width="15" height="1" fill="#e2e2e2"/>
<rect x="276" y="306" width="16" height="1" fill="#e8d7c2"/>
<rect x="292" y="306" width="15" height="1" fill="#e2e2e2"/>
<rect x="307" y="306" width="15" height="1" fill="#e8d7c2"/>
<rect x="322" y="306" width="15" height="1" fill="#e2e2e2"/>
<rect x="337" y="306" width="15" height="1" fill="#e8d7c2"/>
<rect x="352" y="306" width="15" height="1" fill="#e2e2e2"/>
<rect x="367" y="306" width="15" height="1" fill="#e8d7c2"/>
<rect x="382" y="306" width="15" height="1" fill="#e2e2e2"/>
<rect x="397" y="306" width="15" height="1" fill="#e8d7c2"/>
<rect x="412" y="306" width="15" height="1" fill="#e2e2e2"/>
<rect x="427" y="306" width="15" height="1" fill="#e8d7c2"/>
<rect x="442" y="306" width="16" height="1" fill="#e2e2e2"/>
<rect x="458" y="306" width="15" height="1" fill="#e8d7c2"/>
<rect x="473" y="306" width="15" height="1" fill="#e2e2e2"/>
<rect x="488" y="306" width="15" height="1" fill="#e8d7c2"/>
<rect x="503" y="306" width="15" height="1" fill="#e2e2e2"/>
<rect x="518" y="306" width="15" height="1" fill="#e8d7c2"/>
<rect x="533" y="306" width="15" height="1" fill="#e2e2e2"/>
<rect x="548" y="306" width="15" height="1" fill="#e8d7c2"/>
<rect x="563" y="306" width="15" height="1" fill="#e2e2e2"/>
<rect x="578" y="306" width="15" height="1" fill="#e8d7c2"/>
<rect x="593" y="306" width="15" height="1" fill="#e2e2e2"/>
<rect x="608" y="306" width="16" height="1" fill="#e8d7c2"/>
<rect x="624" y="306" width="15" height="1" fill="#e2e2e2"/>
<rect x="639" y="306" width="15" height="1" fill="#e8d7c2"/>
<rect x="654" y="306" width="15" height="1" fill="#e2e2e2"/>
<rect x="669" y="306" width="15" height="1" fill="#e8d7c2"/>
<rect x="684" y="306" width="15" height="1" fill="#e2e2e2"/>
<rect x="699" y="306" width="15" height="1" fill="#e8d7c2"/>
<rect x="714" y="306" width="15" height="1" fill="#e2e2e2"/>
<rect x="729" y="306" width="15" height="1" fill="#e8d7c2"/>
<rect x="744" y="306" width="15" height="1" fill="#e2e2e2"/>
<rect x="759" y="306" width="16" height="1" fill="#e8d7c2"/>
<rect x="775" y="306" width="15" height="1" fill="#e2e2e2"/>
<rect x="790" y="306" width="15" height="1" fill="#e8d7c2"/>
<rect x="805" y="306" width="15" height="1" fill="#e2e2e2"/>
<rect x="820" y="306" width="15" height="1" fill="#e8d7c2"/>
<rect x="835" y="306" width="15" height="1" fill="#e2e2e2"/>
<rect x="50" y="337" width="15" height="1" fill="#e2e2e2"/>
<rect x="65" y="337" width="15" height="1" fill="#e8d7c2"/>
<rect x="80" y="337" width="15" height="1" fill="#e2e2e2"/>
<rect x="95" y="337" width="15" height="1" fill="#e8d7c2"/>
<rect x="110" y="337" width="15" height="1" fill="#e2e2e2"/>
<rect x="125" y="337" width="16" height="1" fill="#e8d7c2"/>
<rect x="141" y="337" width="15" height="1" fill="#e2e2e2"/>
<rect x="156" y="337" width="15" height="1" fill="#e8d7c2"/>
<rect x="171" y="337" width="15" height="1" fill="#e2e2e2"/>
<rect x="186" y="337" width="15" height="1" fill="#e8d7c2"/>
<rect x="201" y="337" width="15" height="1" fill="#e2e2e2"/>
<rect x="216" y="337" width="15" height="1" fill="#e8d7c2"/>
<rect x="231" y="337" width="15" height="1" fill="#e2e2e2"/>
<rect x="246" y="337" width="15" height="1" fill="#e8d7c2"/>
<rect x="261" y="337" width="15" height="1" fill="#e2e2e2"/>
<rect x="276" y="337" width="16" height="1" fill="#e8d7c2"/>
<rect x="292" y="337" width="15" height="1" fill="#e2e2e2"/>
<rect x="307" y="337" width="15" height="1" fill="#e8d7c2"/>
<rect x="322" y="337" width="15" height="1" fill="#e2e2e2"/>
<rect x="337" y="337" width="15" height="1" fill="#e8d7c2"/>
<rect x="352" y="337" width="15" height="1" fill="#e2e2e2"/>
<rect x="367" y="337" width="15" height="1" fill="#e8d7c2"/>
<rect x="382" y="337" width="15" height="1" fill="#e2e2e2"/>
<rect x="397" y="337" width="15" height="1" fill="#e8d7c2"/>
<rect x="412" y="337" width="15" height="1" fill="#e2e2e2"/>
<rect x="427" y="337" width="15" height="1" fill="#e8d7c2"/>
<rect x="442" y="337" width="16" height="1" fill="#e2e2e2"/>
<rect x="458" y="337" width="15" height="1" fill="#e8d7c2"/>
<rect x="473" y="337" width="15" height="1" fill="#e2e2e2"/>
<rect x="488" y="337" width="15" height="1" fill="#e8d7c2"/>
<rect x="503" y="337" width="15" height="1" fill="#e2e2e2"/>
<rect x="518" y="337" width="15" height="1" fill="#e8d7c2"/>
<rect x="533" y="337" width="15" height="1" fill="#e2e2e2"/>
<rect x="548" y="337" width="15" height="1" fill="#e8d7c2"/>
<rect x="563" y="337" width="15" height="1" fill="#e2e2e2"/>
<rect x="578" y="337" width="15" height="1" fill="#e8d7c2"/>
<rect x="593" y="337" width="15" height="1" fill="#e2e2e2"/>
<rect x="608" y="337" width="16" height="1" fill="#e8d7c2"/>
<rect x="624" y="337" width="15" height="1" fill="#e2e2e2"/>
<rect x="639" y="337" width="15" height="1" fill="#e8d7c2"/>
<rect x="654" y="337" width="15" height="1" fill="#e2e2e2"/>
<rect x="669" y="337" width="15" height="1" fill="#e8d7c2"/>
<rect x="684" y="337" width="15" height="1" fill="#e2e2e2"/>
<rect x="699" y="337" width="15" height="1" fill="#e8d7c2"/>
<rect x="714" y="337" width="15" height="1" fill="#e2e2e2"/>
<rect x="729" y="337" width="15" height="1" fill="#e8d7c2"/>
<rect x="744" y="337" width="15" height="1" fill="#e2e2e2"/>
<rect x="759" y="337" width="16" height="1" fill="#e8d7c2"/>
<rect x="775" y="337" width="15" height="1" fill="#e2e2e2"/>
<rect x="790" y="337" width="15" height="1" fill="#e8d7c2"/>
<rect x="805" y="337" width="15" height="1" fill="#e2e2e2"/>
<rect x="820" y="337" width="15" height="1" fill="#e8d7c2"/>
<rect x="835" y="337" width="15" height="1" fill="#e2e2e2"/>
<rect x="50" y="367" width="15" height="1" fill="#e2e2e2"/>
<rect x="65" y="367" width="15" height="1" fill="#e8d7c2"/>
<rect x="80" y="367" width="15" height="1" fill="#e2e2e2"/>
<rect x="95" y="367" width="15" height="1" fill="#e8d7c2"/>
<rect x="110" y="367" width="15" height="1" fill="#e2e2e2"/>
<rect x="125" y="367" width="16" height="1" fill="#e8d7c2"/>
<rect x="141" y="367" width="15" height="1" fill="#e2e2e2"/>
<rect x="156" y="367" width="15" height="1" fill="#e8d7c2"/>
<rect x="171" y="367" width="15" height="1" fill="#e2e2e2"/>
<rect x="186" y="367" width="15" height="1" fill="#e8d7c2"/>
<rect x="201" y="367" width="15" height="1" fill="#e2e2e2"/>
<rect x="216" y="367" width="15" height="1" fill="#e8d7c2"/>
<rect x="231" y="367" width="15" height="1" fill="#e2e2e2"/>
<rect x="246" y="367" width="15" height="1" fill="#e8d7c2"/>
<rect x="261" y="367" width="15" height="1" fill="#e2e2e2"/>
<rect x="276" y="367" width="16" height="1" fill="#e8d7c2"/>
<rect x="292" y="367" width="15" height="1" fill="#e2e2e2"/>
<rect x="307" y="367" width="15" height="1" fill="#e8d7c2"/>
<rect x="322" y="367" width="15" height="1" fill="#e2e2e2"/>
<rect x="337" y="367" width="15" height="1" fill="#e8d7c2"/>
<rect x="352" y="367" width="15" height="1" fill="#e2e2e2"/>
<rect x="367" y="367" width="15" height="1" fill="#e8d7c2"/>
<rect x="382" y="367" width="15" height="1" fill="#e2e2e2"/>
<rect x="397" y="367" width="15" height="1" fill="#e8d7c2"/>
<rect x="412" y="367" width="15" height="1" fill="#e2e2e2"/>
<rect x="427" y="367" width="15" height="1" fill="#e8d7c2"/>
<rect x="442" y="367" width="16" height="1" fill="#e2e2e2"/>
<rect x="458" y="367" width="15" height="1" fill="#e8d7c2"/>
<rect x="473" y="367" width="15" height="1" fill="#e2e2e2"/>
<rect x="488" y="367" width="15" height="1" fill="#e8d7c2"/>
<rect x="503" y="367" width="15" height="1" fill="#e2e2e2"/>
<rect x="518" y="367" width="15" height="1" fill="#e8d7c2"/>
<rect x="533" y="367" width="15" height="1" fill="#e2e2e2"/>
<rect x="548" y="367" width="15" height="1" fill="#e8d7c2"/>
<rect x="563" y="367" width="15" height="1" fill="#e2e2e2"/>
<rect x="578" y="367" width="15" height="1" fill="#e8d7c2"/>
<rect x="593" y="367" width="15" height="1" fill="#e2e2e2"/>
<rect x="608" y="367" width="16" height="1" fill="#e8d7c2"/>
<rect x="624" y="367" width="15" height="1" fill="#e2e2e2"/>
<rect x="639" y="367" width="15" height="1" fill="#e8d7c2"/>
<rect x="654" y="367" width="15" height="1" fill="#e2e2e2"/>
<rect x="669" y="367" width="15" height="1" fill="#e8d7c2"/>
<rect x="684" y="367" width="15" height="1" fill="#e2e2e2"/>
<rect x="699" y="367" width="15" height="1" fill="#e8d7c2"/>
<rect x="714" y="367" width="15" height="1" fill="#e2e2e2"/>
<rect x="729" y="367" width="15" height="1" fill="#e8d7c2"/>
<rect x="744" y="367" width="15" height="1" fill="#e2e2e2"/>
<rect x="759" y="367" width="16" height="1" fill="#e8d7c2"/>
<rect x="775" y="367" width="15" height="1" fill="#e2e2e2"/>
<rect x="790" y="367" width="15" height="1" fill="#e8d7c2"/>
<rect x="805" y="367" width="15" height="1" fill="#e2e2e2"/>
<rect x="820" y="367" width="15" height="1" fill="#e8d7c2"/>
<rect x="835" y="367" width="15" height="1" fill="#e2e2e2"/>
<rect x="50" y="397" width="15" height="1" fill="#e2e2e2"/>
<rect x="65" y="397" width="15" height="1" fill="#e8d7c2"/>
<rect x="80" y="397" width="15" height="1" fill="#e2e2e2"/>
<rect x="95" y="397" width="15" height="1" fill="#e8d7c2"/>
<rect x="110" y="397" width="15" height="1" fill="#e2e2e2"/>
<rect x="125" y="397" width="16" height="1" fill="#e8d7c2"/>
<rect x="141" y="397" width="15" height="1" fill="#e2e2e2"/>
<rect x="156" y="397" width="15" height="1" fill="#e8d7c2"/>
<rect x="171" y="397" width="15" height="1" fill="#e2e2e2"/>
<rect x="186" y="397" width="15" height="1" fill="#e8d7c2"/>
<rect x="201" y="397" width="15" height="1" fill="#e2e2e2"/>
<rect x="216" y="397" width="15" height="1" fill="#e8d7c2"/>
<rect x="231" y="397" width="15" height="1" fill="#e2e2e2"/>
<rect x="246" y="397" width="15" height="1" fill="#e8d7c2"/>
<rect x="261" y="397" width="15" height="1" fill="#e2e2e2"/>
<rect x="276" y="397" width="16" height="1" fill="#e8d7c2"/>
<rect x="292" y="397" width="15" height="1" fill="#e2e2e2"/>
<rect x="307" y="397" width="15" height="1" fill="#e8d7c2"/>
<rect x="322" y="397" width="15" height="1" fill="#e2e2e2"/>
<rect x="337" y="397" width="15" height="1" fill="#e8d7c2"/>
<rect x="352" y="397" width="15" height="1" fill="#e2e2e2"/>
<rect x="367" y="397" width="15" height="1" fill="#e8d7c2"/>
<rect x="382" y="397" width="15" height="1" fill="#e2e2e2"/>
<rect x="397" y="397" width="15" height="1" fill="#e8d7c2"/>
<rect x="412" y="397" width="15" height="1" fill="#e2e2e2"/>
<rect x="427" y="397" width="15" height="1" fill="#e8d7c2"/>
<rect x="442" y="397" width="16" height="1" fill="#e2e2e2"/>
<rect x="458" y="397" width="15" height="1" fill="#e8d7c2"/>
<rect x="473" y="397" width="15" height="1" fill="#e2e2e2"/>
<rect x="488" y="397" width="15" height="1" fill="#e8d7c2"/>
<rect x="503" y="397" width="15" height="1" fill="#e2e2e2"/>
<rect x="518" y="397" width="15" height="1" fill="#e8d7c2"/>
<rect x="533" y="397" width="15" height="1" fill="#e2e2e2"/>
<rect x="548" y="397" width="15" height="1" fill="#e8d7c2"/>
<rect x="563" y="397" width="15" height="1" fill="#e2e2e2"/>
<rect x="578" y="397" width="15" height="1" fill="#e8d7c2"/>
<rect x="593" y="397" width="15" height="1" fill="#e2e2e2"/>
<rect x="608" y="397" width="16" height="1" fill="#e8d7c2"/>
<rect x="624" y="397" width="15" height="1" fill="#e2e2e2"/>
<rect x="639" y="397" width="15" height="1" fill="#e8d7c2"/>
<rect x="654" y="397" width="15" height="1" fill="#e2e2e2"/>
<rect x="669" y="397" width="15" height="1" fill="#e8d7c2"/>
<rect x="684" y="397" width="15" height="1" fill="#e2e2e2"/>
<rect x="699" y="397" width="15" height="1" fill="#e8d7c2"/>
<rect x="714" y="397" width="15" height="1" fill="#e2e2e2"/>
<rect x="729" y="397" width="15" height="1" fill="#e8d7c2"/>
<rect x="744" y="397" width="15" height="1" fill="#e2e2e2"/>
<rect x="759" y="397" width="16" height="1" fill="#e8d7c2"/>
<rect x="775" y="397" width="15" height="1" fill="#e2e2e2"/>
<rect x="790" y="397" width="15" height="1" fill="#e8d7c2"/>
<rect x="805" y="397" width="15" height="1" fill="#e2e2e2"/>
<rect x="820" y="397" width="15" height="1" fill="#e8d7c2"/>
<rect x="835" y="397" width="15" height="1" fill="#e2e2e2"/>
<rect x="50" y="428" width="15" height="1" fill="#e2e2e2"/>
<rect x="65" y="428" width="15" height="1" fill="#e8d7c2"/>
<rect x="80" y="428" width="15" height="1" fill="#e2e2e2"/>
<rect x="95" y="428" width="15" height="1" fill="#e8d7c2"/>
<rect x="110" y="428" width="15" height="1" fill="#e2e2e2"/>
<rect x="125" y="428" width="16" height="1" fill="#e8d7c2"/>
<rect x="141" y="428" width="15" height="1" fill="#e2e2e2"/>
<rect x="156" y="428" width="15" height="1" fill="#e8d7c2"/>
<rect x="171" y="428" width="15" height="1" fill="#e2e2e2"/>
<rect x="186" y="428" width="15" height="1" fill="#e8d7c2"/>
<rect x="201" y="428" width="15" height="1" fill="#e2e2e2"/>
<rect x="216" y="428" width="15" height="1" fill="#e8d7c2"/>
<rect x="231" y="428" width="15" height="1" fill="#e2e2e2"/>
<rect x="246" y="428" width="15" height="1" fill="#e8d7c2"/>
<rect x="261" y="428" width="15" height="1" fill="#e2e2e2"/>
<rect x="276" y="428" width="16" height="1" fill="#e8d7c2"/>
<rect x="292" y="428" width="15" height="1" fill="#e2e2e2"/>
<rect x="307" y="428" width="15" height="1" fill="#e8d7c2"/>
<rect x="322" y="428" width="15" height="1" fill="#e2e2e2"/>
<rect x="337" y="428" width="15" height="1" fill="#e8d7c2"/>
<rect x="352" y="428" width="15" height="1" fill="#e2e2e2"/>
<rect x="367" y="428" width="15" height="1" fill="#e8d7c2"/>
<rect x="382" y="428" width="15" height="1" fill="#e2e2e2"/>
<rect x="397" y="428" width="15" height="1" fill="#e8d7c2"/>
<rect x="412" y="428" width="15" height="1" fill="#e2e2e2"/>
<rect x="427" y="428" width="15" height="1" fill="#e8d7c2"/>
<rect x="442" y="428" width="16" height="1" fill="#e2e2e2"/>
<rect x="458" y="428" width="15" height="1" fill="#e8d7c2"/>
<rect x="473" y="428" width="15" height="1" fill="#e2e2e2"/>
<rect x="488" y="428" width="15" height="1" fill="#e8d7c2"/>
<rect x="503" y="428" width="15" height="1" fill="#e2e2e2"/>
<rect x="518" y="428" width="15" height="1" fill="#e8d7c2"/>
<rect x="533" y="428" width="15" height="1" fill="#e2e2e2"/>
<rect x="548" y="428" width="15" height="1" fill="#e8d7c2"/>
<rect x="563" y="428" width="15" height="1" fill="#e2e2e2"/>
<rect x="578" y="428" width="15" height="1" fill="#e8d7c2"/>
<rect x="593" y="428" width="15" height="1" fill="#e2e2e2"/>
<rect x="608" y="428" width="16" height="1" fill="#e8d7c2"/>
<rect x="624" y="428" width="15" height="1" fill="#e2e2e2"/>
<rect x="639" y="428" width="15" height="1" fill="#e8d7c2"/>
<rect x="654" y="428" width="15" height="1" fill="#e2e2e2"/>
<rect x="669" y="428" width="15" height="1" fill="#e8d7c2"/>
<rect x="684" y="428" width="15" height="1" fill="#e2e2e2"/>
<rect x="699" y="428" width="15" height="1" fill="#e8d7c2"/>
<rect x="714" y="428" width="15" height="1" fill="#e2e2e2"/>
<rect x="729" y="428" width="15" height="1" fill="#e8d7c2"/>
<rect x="744" y="428" width="15" height="1" fill="#e2e2e2"/>
<rect x="759" y="428" width="16" height="1" fill="#e8d7c2"/>
<rect x="775" y="428" width="15" height="1" fill="#e2e2e2"/>
<rect x="790" y="428" width="15" height="1" fill="#e8d7c2"/>
<rect x="805" y="428" width="15" height="1" fill="#e2e2e2"/>
<rect x="820" y="428" width="15" height="1" fill="#e8d7c2"/>
<rect x="835" y="428" width="15" height="1" fill="#e2e2e2"/>
<rect x="65" y="33" width="1" height="425" fill="#dfdfdf"/>
<rect x="80" y="33" width="1" height="425" fill="#dfdfdf"/>
<rect x="95" y="33" width="1" height="425" fill="#dfdfdf"/>
<rect x="110" y="33" width="1" height="425" fill="#dfdfdf"/>
<rect x="125" y="33" width="1" height="425" fill="#dfdfdf"/>
<rect x="141" y="33" width="1" height="425" fill="#dfdfdf"/>
<rect x="156" y="33" width="1" height="425" fill="#dfdfdf"/>
<rect x="171" y="33" width="1" height="425" fill="#dfdfdf"/>
<rect x="186" y="33" width="1" height="425" fill="#dfdfdf"/>
<rect x="201" y="33" width="1" height="425" fill="#dfdfdf"/>
<rect x="216" y="33" width="1" height="425" fill="#dfdfdf"/>
<rect x="231" y="33" width="1" height="425" fill="#dfdfdf"/>
<rect x="246" y="33" width="1" height="425" fill="#dfdfdf"/>
<rect x="261" y="33" width="1" height="425" fill="#dfdfdf"/>
<rect x="276" y="33" width="1" height="425" fill="#dfdfdf"/>
<rect x="292" y="33" width="1" height="425" fill="#dfdfdf"/>
<rect x="307" y="33" width="1" height="425" fill="#dfdfdf"/>
<rect x="322" y="33" width="1" height="425" fill="#dfdfdf"/>
<rect x="337" y="33" width="1" height="425" fill="#dfdfdf"/>
<rect x="352" y="33" width="1" height="425" fill="#dfdfdf"/>
<rect x="367" y="33" width="1" height="425" fill="#dfdfdf"/>
<rect x="382" y="33" width="1" height="425" fill="#dfdfdf"/>
<rect x="397" y="33" width="1" height="425" fill="#dfdfdf"/>
<rect x="412" y="33" width="1" height="425" fill="#dfdfdf"/>
<rect x="427" y="33" width="1" height="425" fill="#dfdfdf"/>
<rect x="442" y="33" width="1" height="425" fill="#dfdfdf"/>
<rect x="458" y="33" width="1" height="425" fill="#dfdfdf"/>
<rect x="473" y="33" width="1" height="425" fill="#dfdfdf"/>
<rect x="488" y="33" width="1" height="425" fill="#dfdfdf"/>
<rect x="503" y="33" width="1" height="425" fill="#dfdfdf"/>
<rect x="518" y="33" width="1" height="425" fill="#dfdfdf"/>
<rect x="533" y="33" width="1" height="425" fill="#dfdfdf"/>
<rect x="548" y="33" width="1" height="425" fill="#dfdfdf"/>
<rect x="563" y="33" width="1" height="425" fill="#dfdfdf"/>
<rect x="578" y="33" width="1" height="425" fill="#dfdfdf"/>
<rect x="593" y="33" width="1" height="425" fill="#dfdfdf"/>
<rect x="608" y="33" width="1" height="425" fill="#dfdfdf"/>
<rect x="624" y="33" width="1" height="425" fill="#dfdfdf"/>
<rect x="639" y="33" width="1" height="425" fill="#dfdfdf"/>
<rect x="654" y="33" width="1" height="425" fill="#dfdfdf"/>
<rect x="669" y="33" width="1" height="425" fill="#dfdfdf"/>
<rect x="684" y="33" width="1" height="425" fill="#dfdfdf"/>
<rect x="699" y="33" width="1" height="425" fill="#dfdfdf"/>
<rect x="714" y="33" width="1" height="425" fill="#dfdfdf"/>
<rect x="729" y="33" width="1" height="425" fill="#dfdfdf"/>
<rect x="744" y="33" width="1" height="425" fill="#dfdfdf"/>
<rect x="759" y="33" width="1" height="425" fill="#dfdfdf"/>
<rect x="775" y="33" width="1" height="425" fill="#dfdfdf"/>
<rect x="790" y="33" width="1" height="425" fill="#dfdfdf"/>
<rect x="805" y="33" width="1" height="425" fill="#dfdfdf"/>
<rect x="820" y="33" width="1" height="425" fill="#dfdfdf"/>
<rect x="835" y="33" width="1" height="425" fill="#dfdfdf"/>
</g>
<polyline class="ce" points="50.5,82.0 65.5,87.2 80.5,85.2 95.5,113.0 110.5,51.8 125.5,80.5 141.5,112.2 156.5,67.5 171.5,136.5 186.5,225.5 201.5,232.8 216.5,212.3 231.5,185.5 246.5,172.5 261.5,265.0 276.5,301.5 292.5,408.8 307.5,433.0 322.5,425.8 337.5,422.2 352.5,416.3 367.5,372.2 382.5,333.0 397.5,290.0 412.5,260.5 427.5,423.0 442.5,390.0 458.5,391.0 473.5,368.0 488.5,332.2 503.5,353.5 518.5,369.7 533.5,329.7 548.5,325.0 563.5,367.2 578.5,313.0 593.5,281.5 608.5,273.3 624.5,299.8 639.5,356.5 654.5,352.5 669.5,298.8 684.5,352.5 699.5,240.0 714.5,281.0 729.5,332.0 744.5,318.5 759.5,310.2 775.5,273.7 790.5,257.2 805.5,296.6 820.5,325.8 835.5,325.7" fill="none" stroke="#239a23" stroke-width="1" stroke-linejoin="round"/>
<g class="ce">
<rect x="50" y="72" width="5" height="175" fill="#000"/>
<rect x="51" y="73" width="3" height="173" fill="#c1c1ff"/>
<rect x="55" y="229" width="5" height="18" fill="#000"/>
<rect x="56" y="230" width="3" height="16" fill="#ffffc8"/>
<rect x="60" y="246" width="5" height="190" fill="#000"/>
<rect x="61" y="247" width="3" height="188" fill="#8b2268"/>
<rect x="65" y="73" width="5" height="174" fill="#000"/>
<rect x="66" y="74" width="3" height="172" fill="#c1c1ff"/>
<rect x="70" y="229" width="5" height="18" fill="#000"/>
<rect x="71" y="230" width="3" height="16" fill="#ffffc8"/>
<rect x="75" y="246" width="5" height="189" fill="#000"/>
<rect x="76" y="247" width="3" height="187" fill="#8b2268"/>
<rect x="80" y="67" width="5" height="180" fill="#000"/>
<rect x="81" y="68" width="3" height="178" fill="#c1c1ff"/>
<rect x="85" y="232" width="5" height="15" fill="#000"/>
<rect x="86" y="233" width="3" height="13" fill="#ffffc8"/>
<rect x="90" y="246" width="5" height="193" fill="#000"/>
<rect x="91" y="247" width="3" height="191" fill="#8b2268"/>
<rect x="95" y="78" width="5" height="169" fill="#000"/>
<rect x="96" y="79" width="3" height="167" fill="#c1c1ff"/>
<rect x="100" y="230" width="5" height="17" fill="#000"/>
<rect x="101" y="231" width="3" height="15" fill="#ffffc8"/>
<rect x="105" y="246" width="5" height="183" fill="#000"/>
<rect x="106" y="247" width="3" height="181" fill="#8b2268"/>
<rect x="110" y="59" width="5" height="188" fill="#000"/>
<rect x="111" y="60" width="3" height="186" fill="#c1c1ff"/>
<rect x="115" y="232" width="5" height="15" fill="#000"/>
<rect x="116" y="233" width="3" height="13" fill="#ffffc8"/>
<rect x="120" y="246" width="5" height="201" fill="#000"/>
<rect x="121" y="247" width="3" height="199" fill="#8b2268"/>
<rect x="125" y="72" width="5" height="175" fill="#000"/>
<rect x="126" y="73" width="3" height="173" fill="#c1c1ff"/>
<rect x="130" y="230" width="5" height="17" fill="#000"/>
<rect x="131" y="231" width="3" height="15" fill="#ffffc8"/>
<rect x="135" y="246" width="5" height="190" fill="#000"/>
<rect x="136" y="247" width="3" height="188" fill="#8b2268"/>
<rect x="141" y="90" width="5" height="157" fill="#000"/>
<rect x="142" y="91" width="3" height="155" fill="#c1c1ff"/>
<rect x="146" y="225" width="5" height="22" fill="#000"/>
<rect x="147" y="226" width="3" height="20" fill="#ffffc8"/>
<rect x="151" y="246" width="5" height="177" fill="#000"/>
<rect x="152" y="247" width="3" height="175" fill="#8b2268"/>
<rect x="156" y="68" width="5" height="179" fill="#000"/>
<rect x="157" y="69" width="3" height="177" fill="#c1c1ff"/>
<rect x="161" y="232" width="5" height="15" fill="#000"/>
<rect x="162" y="233" width="3" height="13" fill="#ffffc8"/>
<rect x="166" y="246" width="5" height="192" fill="#000"/>
<rect x="167" y="247" width="3" height="190" fill="#8b2268"/>
<rect x="171" y="96" width="5" height="151" fill="#000"/>
<rect x="172" y="97" width="3" height="149" fill="#c1c1ff"/>
<rect x="176" y="230" width="5" height="17" fill="#000"/>
<rect x="177" y="231" width="3" height="15" fill="#ffffc8"/>
<rect x="181" y="246" width="5" height="165" fill="#000"/>
<rect x="182" y="247" width="3" height="163" fill="#8b2268"/>
<rect x="186" y="127" width="5" height="120" fill="#000"/>
<rect x="187" y="128" width="3" height="118" fill="#c1c1ff"/>
<rect x="191" y="230" width="5" height="17" fill="#000"/>
<rect x="192" y="231" width="3" height="15" fill="#ffffc8"/>
<rect x="196" y="246" width="5" height="135" fill="#000"/>
<rect x="197" y="247" width="3" height="133" fill="#8b2268"/>
<rect x="201" y="136" width="5" height="111" fill="#000"/>
<rect x="202" y="137" width="3" height="109" fill="#c1c1ff"/>
<rect x="206" y="232" width="5" height="15" fill="#000"/>
<rect x="207" y="233" width="3" height="13" fill="#ffffc8"/>
<rect x="211" y="246" width="5" height="124" fill="#000"/>
<rect x="212" y="247" width="3" height="122" fill="#8b2268"/>
<rect x="216" y="126" width="5" height="121" fill="#000"/>
<rect x="217" y="127" width="3" height="119" fill="#c1c1ff"/>
<rect x="221" y="233" width="5" height="14" fill="#000"/>
<rect x="222" y="234" width="3" height="12" fill="#ffffc8"/>
<rect x="226" y="246" width="5" height="133" fill="#000"/>
<rect x="227" y="247" width="3" height="131" fill="#8b2268"/>
<rect x="231" y="115" width="5" height="132" fill="#000"/>
<rect x="232" y="116" width="3" height="130" fill="#c1c1ff"/>
<rect x="236" y="231" width="5" height="16" fill="#000"/>
<rect x="237" y="232" width="3" height="14" fill="#ffffc8"/>
<rect x="241" y="246" width="5" height="146" fill="#000"/>
<rect x="242" y="247" width="3" height="144" fill="#8b2268"/>
<rect x="246" y="114" width="5" height="133" fill="#000"/>
<rect x="247" y="115" width="3" height="131" fill="#c1c1ff"/>
<rect x="251" y="228" width="5" height="19" fill="#000"/>
<rect x="252" y="229" width="3" height="17" fill="#ffffc8"/>
<rect x="256" y="246" width="5" height="150" fill="#000"/>
<rect x="257" y="247" width="3" height="148" fill="#8b2268"/>
<rect x="261" y="138" width="5" height="109" fill="#000"/>
<rect x="262" y="139" width="3" height="107" fill="#c1c1ff"/>
<rect x="266" y="232" width="5" height="15" fill="#000"/>
<rect x="267" y="233" width="3" height="13" fill="#ffffc8"/>
<rect x="271" y="246" width="5" height="122" fill="#000"/>
<rect x="272" y="247" width="3" height="120" fill="#8b2268"/>
<rect x="276" y="144" width="5" height="103" fill="#000"/>
<rect x="277" y="145" width="3" height="101" fill="#c1c1ff"/>
<rect x="281" y="230" width="5" height="17" fill="#000"/>
<rect x="282" y="231" width="3" height="15" fill="#ffffc8"/>
<rect x="286" y="246" width="5" height="117" fill="#000"/>
<rect x="287" y="247" width="3" height="115" fill="#8b2268"/>
<rect x="292" y="153" width="5" height="94" fill="#000"/>
<rect x="293" y="154" width="3" height="92" fill="#c1c1ff"/>
<rect x="297" y="236" width="5" height="11" fill="#000"/>
<rect x="298" y="237" width="3" height="9" fill="#ffffc8"/>
<rect x="302" y="246" width="5" height="102" fill="#000"/>
<rect x="303" y="247" width="3" height="100" fill="#8b2268"/>
<rect x="307" y="163" width="5" height="84" fill="#000"/>
<rect x="308" y="164" width="3" height="82" fill="#c1c1ff"/>
<rect x="312" y="234" width="5" height="13" fill="#000"/>
<rect x="313" y="235" width="3" height="11" fill="#ffffc8"/>
<rect x="317" y="246" width="5" height="95" fill="#000"/>
<rect x="318" y="247" width="3" height="93" fill="#8b2268"/>
<rect x="322" y="167" width="5" height="80" fill="#000"/>
<rect x="323" y="168" width="3" height="78" fill="#c1c1ff"/>
<rect x="327" y="233" width="5" height="14" fill="#000"/>
<rect x="328" y="234" width="3" height="12" fill="#ffffc8"/>
<rect x="332" y="246" width="5" height="92" fill="#000"/>
<rect x="333" y="247" width="3" height="90" fill="#8b2268"/>
<rect x="337" y="176" width="5" height="71" fill="#000"/>
<rect x="338" y="177" width="3" height="69" fill="#c1c1ff"/>
<rect x="342" y="234" width="5" height="13" fill="#000"/>
<rect x="343" y="235" width="3" height="11" fill="#ffffc8"/>
<rect x="347" y="246" width="5" height="82" fill="#000"/>
<rect x="348" y="247" width="3" height="80" fill="#8b2268"/>
<rect x="352" y="186" width="5" height="61" fill="#000"/>
<rect x="353" y="187" width="3" height="59" fill="#c1c1ff"/>
<rect x="357" y="232" width="5" height="15" fill="#000"/>
<rect x="358" y="233" width="3" height="13" fill="#ffffc8"/>
<rect x="362" y="246" width="5" height="74" fill="#000"/>
<rect x="363" y="247" width="3" height="72" fill="#8b2268"/>
<rect x="367" y="187" width="5" height="60" fill="#000"/>
<rect x="368" y="188" width="3" height="58" fill="#c1c1ff"/>
<rect x="372" y="233" width="5" height="14" fill="#000"/>
<rect x="373" y="234" width="3" height="12" fill="#ffffc8"/>
<rect x="377" y="246" width="5" height="72" fill="#000"/>
<rect x="378" y="247" width="3" height="70" fill="#8b2268"/>
<rect x="382" y="179" width="5" height="68" fill="#000"/>
<rect x="383" y="180" width="3" height="66" fill="#c1c1ff"/>
<rect x="387" y="236" width="5" height="11" fill="#000"/>
<rect x="388" y="237" width="3" height="9" fill="#ffffc8"/>
<rect x="392" y="246" width="5" height="77" fill="#000"/>
<rect x="393" y="247" width="3" height="75" fill="#8b2268"/>
<rect x="397" y="181" width="5" height="66" fill="#000"/>
<rect x="398" y="182" width="3" height="64" fill="#c1c1ff"/>
<rect x="402" y="236" width="5" height="11" fill="#000"/>
<rect x="403" y="237" width="3" height="9" fill="#ffffc8"/>
<rect x="407" y="246" width="5" height="75" fill="#000"/>
<rect x="408" y="247" width="3" height="73" fill="#8b2268"/>
<rect x="412" y="179" width="5" height="68" fill="#000"/>
<rect x="413" y="180" width="3" height="66" fill="#c1c1ff"/>
<rect x="417" y="235" width="5" height="12" fill="#000"/>
<rect x="418" y="236" width="3" height="10" fill="#ffffc8"/>
<rect x="422" y="246" width="5" height="77" fill="#000"/>
<rect x="423" y="247" width="3" height="75" fill="#8b2268"/>
<rect x="427" y="173" width="5" height="74" fill="#000"/>
<rect x="428" y="174" width="3" height="72" fill="#c1c1ff"/>
<rect x="432" y="238" width="5" height="9" fill="#000"/>
<rect x="433" y="239" width="3" height="7" fill="#ffffc8"/>
<rect x="437" y="246" width="5" height="81" fill="#000"/>
<rect x="438" y="247" width="3" height="79" fill="#8b2268"/>
<rect x="442" y="174" width="5" height="73" fill="#000"/>
<rect x="443" y="175" width="3" height="71" fill="#c1c1ff"/>
<rect x="447" y="235" width="5" height="12" fill="#000"/>
<rect x="448" y="236" width="3" height="10" fill="#ffffc8"/>
<rect x="452" y="246" width="5" height="82" fill="#000"/>
<rect x="453" y="247" width="3" height="80" fill="#8b2268"/>
<rect x="458" y="179" width="5" height="68" fill="#000"/>
<rect x="459" y="180" width="3" height="66" fill="#c1c1ff"/>
<rect x="463" y="235" width="5" height="12" fill="#000"/>
<rect x="464" y="236" width="3" height="10" fill="#ffffc8"/>
<rect x="468" y="246" width="5" height="78" fill="#000"/>
<rect x="469" y="247" width="3" height="76" fill="#8b2268"/>
<rect x="473" y="170" width="5" height="77" fill="#000"/>
<rect x="474" y="171" width="3" height="75" fill="#c1c1ff"/>
<rect x="478" y="236" width="5" height="11" fill="#000"/>
<rect x="479" y="237" width="3" height="9" fill="#ffffc8"/>
<rect x="483" y="246" width="5" height="85" fill="#000"/>
<rect x="484" y="247" width="3" height="83" fill="#8b2268"/>
<rect x="488" y="146" width="5" height="101" fill="#000"/>
<rect x="489" y="147" width="3" height="99" fill="#c1c1ff"/>
<rect x="493" y="236" width="5" height="11" fill="#000"/>
<rect x="494" y="237" width="3" height="9" fill="#ffffc8"/>
<rect x="498" y="246" width="5" height="110" fill="#000"/>
<rect x="499" y="247" width="3" height="108" fill="#8b2268"/>
<rect x="503" y="164" width="5" height="83" fill="#000"/>
<rect x="504" y="165" width="3" height="81" fill="#c1c1ff"/>
<rect x="508" y="234" width="5" height="13" fill="#000"/>
<rect x="509" y="235" width="3" height="11" fill="#ffffc8"/>
<rect x="513" y="246" width="5" height="93" fill="#000"/>
<rect x="514" y="247" width="3" height="91" fill="#8b2268"/>
<rect x="518" y="181" width="5" height="66" fill="#000"/>
<rect x="519" y="182" width="3" height="64" fill="#c1c1ff"/>
<rect x="523" y="235" width="5" height="12" fill="#000"/>
<rect x="524" y="236" width="3" height="10" fill="#ffffc8"/>
<rect x="528" y="246" width="5" height="75" fill="#000"/>
<rect x="529" y="247" width="3" height="73" fill="#8b2268"/>
<rect x="533" y="175" width="5" height="72" fill="#000"/>
<rect x="534" y="176" width="3" height="70" fill="#c1c1ff"/>
<rect x="538" y="238" width="5" height="9" fill="#000"/>
<rect x="539" y="239" width="3" height="7" fill="#ffffc8"/>
<rect x="543" y="246" width="5" height="79" fill="#000"/>
<rect x="544" y="247" width="3" height="77" fill="#8b2268"/>
<rect x="548" y="162" width="5" height="85" fill="#000"/>
<rect x="549" y="163" width="3" height="83" fill="#c1c1ff"/>
<rect x="553" y="237" width="5" height="10" fill="#000"/>
<rect x="554" y="238" width="3" height="8" fill="#ffffc8"/>
<rect x="558" y="246" width="5" height="93" fill="#000"/>
<rect x="559" y="247" width="3" height="91" fill="#8b2268"/>
<rect x="563" y="151" width="5" height="96" fill="#000"/>
<rect x="564" y="152" width="3" height="94" fill="#c1c1ff"/>
<rect x="568" y="236" width="5" height="11" fill="#000"/>
<rect x="569" y="237" width="3" height="9" fill="#ffffc8"/>
<rect x="573" y="246" width="5" height="104" fill="#000"/>
<rect x="574" y="247" width="3" height="102" fill="#8b2268"/>
<rect x="578" y="141" width="5" height="106" fill="#000"/>
<rect x="579" y="142" width="3" height="104" fill="#c1c1ff"/>
<rect x="583" y="237" width="5" height="10" fill="#000"/>
<rect x="584" y="238" width="3" height="8" fill="#ffffc8"/>
<rect x="588" y="246" width="5" height="114" fill="#000"/>
<rect x="589" y="247" width="3" height="112" fill="#8b2268"/>
<rect x="593" y="127" width="5" height="120" fill="#000"/>
<rect x="594" y="128" width="3" height="118" fill="#c1c1ff"/>
<rect x="598" y="236" width="5" height="11" fill="#000"/>
<rect x="599" y="237" width="3" height="9" fill="#ffffc8"/>
<rect x="603" y="246" width="5" height="129" fill="#000"/>
<rect x="604" y="247" width="3" height="127" fill="#8b2268"/>
<rect x="608" y="124" width="5" height="123" fill="#000"/>
<rect x="609" y="125" width="3" height="121" fill="#c1c1ff"/>
<rect x="613" y="237" width="5" height="10" fill="#000"/>
<rect x="614" y="238" width="3" height="8" fill="#ffffc8"/>
<rect x="618" y="246" width="5" height="131" fill="#000"/>
<rect x="619" y="247" width="3" height="129" fill="#8b2268"/>
<rect x="624" y="130" width="5" height="117" fill="#000"/>
<rect x="625" y="131" width="3" height="115" fill="#c1c1ff"/>
<rect x="629" y="237" width="5" height="10" fill="#000"/>
<rect x="630" y="238" width="3" height="8" fill="#ffffc8"/>
<rect x="634" y="246" width="5" height="124" fill="#000"/>
<rect x="635" y="247" width="3" height="122" fill="#8b2268"/>
<rect x="639" y="154" width="5" height="93" fill="#000"/>
<rect x="640" y="155" width="3" height="91" fill="#c1c1ff"/>
<rect x="644" y="237" width="5" height="10" fill="#000"/>
<rect x="645" y="238" width="3" height="8" fill="#ffffc8"/>
<rect x="649" y="246" width="5" height="100" fill="#000"/>
<rect x="650" y="247" width="3" height="98" fill="#8b2268"/>
<rect x="654" y="169" width="5" height="78" fill="#000"/>
<rect x="655" y="170" width="3" height="76" fill="#c1c1ff"/>
<rect x="659" y="236" width="5" height="11" fill="#000"/>
<rect x="660" y="237" width="3" height="9" fill="#ffffc8"/>
<rect x="664" y="246" width="5" height="87" fill="#000"/>
<rect x="665" y="247" width="3" height="85" fill="#8b2268"/>
<rect x="669" y="148" width="5" height="99" fill="#000"/>
<rect x="670" y="149" width="3" height="97" fill="#c1c1ff"/>
<rect x="674" y="237" width="5" height="10" fill="#000"/>
<rect x="675" y="238" width="3" height="8" fill="#ffffc8"/>
<rect x="679" y="246" width="5" height="106" fill="#000"/>
<rect x="680" y="247" width="3" height="104" fill="#8b2268"/>
<rect x="684" y="144" width="5" height="103" fill="#000"/>
<rect x="685" y="145" width="3" height="101" fill="#c1c1ff"/>
<rect x="689" y="236" width="5" height="11" fill="#000"/>
<rect x="690" y="237" width="3" height="9" fill="#ffffc8"/>
<rect x="694" y="246" width="5" height="112" fill="#000"/>
<rect x="695" y="247" width="3" height="110" fill="#8b2268"/>
<rect x="699" y="121" width="5" height="126" fill="#000"/>
<rect x="700" y="122" width="3" height="124" fill="#c1c1ff"/>
<rect x="704" y="238" width="5" height="9" fill="#000"/>
<rect x="705" y="239" width="3" height="7" fill="#ffffc8"/>
<rect x="709" y="246" width="5" height="132" fill="#000"/>
<rect x="710" y="247" width="3" height="130" fill="#8b2268"/>
<rect x="714" y="130" width="5" height="117" fill="#000"/>
<rect x="715" y="131" width="3" height="115" fill="#c1c1ff"/>
<rect x="719" y="237" width="5" height="10" fill="#000"/>
<rect x="720" y="238" width="3" height="8" fill="#ffffc8"/>
<rect x="724" y="246" width="5" height="124" fill="#000"/>
<rect x="725" y="247" width="3" height="122" fill="#8b2268"/>
<rect x="729" y="154" width="5" height="93" fill="#000"/>
<rect x="730" y="155" width="3" height="91" fill="#c1c1ff"/>
<rect x="734" y="237" width="5" height="10" fill="#000"/>
<rect x="735" y="238" width="3" height="8" fill="#ffffc8"/>
<rect x="739" y="246" width="5" height="101" fill="#000"/>
<rect x="740" y="247" width="3" height="99" fill="#8b2268"/>
<rect x="744" y="166" width="5" height="81" fill="#000"/>
<rect x="745" y="167" width="3" height="79" fill="#c1c1ff"/>
<rect x="749" y="234" width="5" height="13" fill="#000"/>
<rect x="750" y="235" width="3" height="11" fill="#ffffc8"/>
<rect x="754" y="246" width="5" height="91" fill="#000"/>
<rect x="755" y="247" width="3" height="89" fill="#8b2268"/>
<rect x="759" y="189" width="5" height="58" fill="#000"/>
<rect x="760" y="190" width="3" height="56" fill="#c1c1ff"/>
<rect x="764" y="237" width="5" height="10" fill="#000"/>
<rect x="765" y="238" width="3" height="8" fill="#ffffc8"/>
<rect x="769" y="246" width="5" height="66" fill="#000"/>
<rect x="770" y="247" width="3" height="64" fill="#8b2268"/>
<rect x="775" y="209" width="5" height="38" fill="#000"/>
<rect x="776" y="210" width="3" height="36" fill="#c1c1ff"/>
<rect x="780" y="237" width="5" height="10" fill="#000"/>
<rect x="781" y="238" width="3" height="8" fill="#ffffc8"/>
<rect x="785" y="246" width="5" height="45" fill="#000"/>
<rect x="786" y="247" width="3" height="43" fill="#8b2268"/>
<rect x="790" y="209" width="5" height="38" fill="#000"/>
<rect x="791" y="210" width="3" height="36" fill="#c1c1ff"/>
<rect x="795" y="237" width="5" height="10" fill="#000"/>
<rect x="796" y="238" width="3" height="8" fill="#ffffc8"/>
<rect x="800" y="246" width="5" height="45" fill="#000"/>
<rect x="801" y="247" width="3" height="43" fill="#8b2268"/>
<rect x="805" y="190" width="5" height="57" fill="#000"/>
<rect x="806" y="191" width="3" height="55" fill="#c1c1ff"/>
<rect x="810" y="238" width="5" height="9" fill="#000"/>
<rect x="811" y="239" width="3" height="7" fill="#ffffc8"/>
<rect x="815" y="246" width="5" height="63" fill="#000"/>
<rect x="816" y="247" width="3" height="61" fill="#8b2268"/>
<rect x="820" y="167" width="5" height="80" fill="#000"/>
<rect x="821" y="168" width="3" height="78" fill="#c1c1ff"/>
<rect x="825" y="237" width="5" height="10" fill="#000"/>
<rect x="826" y="238" width="3" height="8" fill="#ffffc8"/>
<rect x="830" y="246" width="5" height="88" fill="#000"/>
<rect x="831" y="247" width="3" height="86" fill="#8b2268"/>
<rect x="835" y="155" width="5" height="92" fill="#000"/>
<rect x="836" y="156" width="3" height="90" fill="#c1c1ff"/>
<rect x="840" y="239" width="5" height="8" fill="#000"/>
<rect x="841" y="240" width="3" height="6" fill="#ffffc8"/>
<rect x="845" y="246" width="5" height="97" fill="#000"/>
<rect x="846" y="247" width="3" height="95" fill="#8b2268"/>
</g>
<g class="ce" fill="#000">
<rect x="50" y="33" width="1" height="426"/>
<rect x="850" y="33" width="1" height="426"/>
<rect x="50" y="458" width="801" height="1"/>
<rect x="51" y="33" width="5" height="1"/>
<rect x="51" y="39" width="3" height="1"/>
<rect x="51" y="45" width="3" height="1"/>
<rect x="51" y="51" width="3" height="1"/>
<rect x="51" y="57" width="3" height="1"/>
<rect x="51" y="63" width="5" height="1"/>
<rect x="51" y="69" width="3" height="1"/>
<rect x="51" y="76" width="3" height="1"/>
<rect x="51" y="82" width="3" height="1"/>
<rect x="51" y="88" width="3" height="1"/>
<rect x="51" y="94" width="5" height="1"/>
<rect x="51" y="100" width="3" height="1"/>
<rect x="51" y="106" width="3" height="1"/>
<rect x="51" y="112" width="3" height="1"/>
<rect x="51" y="118" width="3" height="1"/>
<rect x="51" y="124" width="5" height="1"/>
<rect x="51" y="130" width="3" height="1"/>
<rect x="51" y="136" width="3" height="1"/>
<rect x="51" y="142" width="3" height="1"/>
<rect x="51" y="148" width="3" height="1"/>
<rect x="51" y="154" width="5" height="1"/>
<rect x="51" y="161" width="3" height="1"/>
<rect x="51" y="167" width="3" height="1"/>
<rect x="51" y="173" width="3" height="1"/>
<rect x="51" y="179" width="3" height="1"/>
<rect x="51" y="185" width="5" height="1"/>
<rect x="51" y="191" width="3" height="1"/>
<rect x="51" y="197" width="3" height="1"/>
<rect x="51" y="203" width="3" height="1"/>
<rect x="51" y="209" width="3" height="1"/>
<rect x="51" y="215" width="5" height="1"/>
<rect x="51" y="221" width="3" height="1"/>
<rect x="51" y="227" width="3" height="1"/>
<rect x="51" y="233" width="3" height="1"/>
<rect x="51" y="239" width="3" height="1"/>
<rect x="51" y="246" width="5" height="1"/>
<rect x="51" y="252" width="3" height="1"/>
<rect x="51" y="258" width="3" height="1"/>
<rect x="51" y="264" width="3" height="1"/>
<rect x="51" y="270" width="3" height="1"/>
<rect x="51" y="276" width="5" height="1"/>
<rect x="51" y="282" width="3" height="1"/>
<rect x="51" y="288" width="3" height="1"/>
<rect x="51" y="294" width="3" height="1"/>
<rect x="51" y="300" width="3" height="1"/>
<rect x="51" y="306" width="5" height="1"/>
<rect x="51" y="312" width="3" height="1"/>
<rect x="51" y="318" width="3" height="1"/>
<rect x="51" y="324" width="3" height="1"/>
<rect x="51" y="331" width="3" height="1"/>
<rect x="51" y="337" width="5" height="1"/>
<rect x="51" y="343" width="3" height="1"/>
<rect x="51" y="349" width="3" height="1"/>
<rect x="51" y="355" width="3" height="1"/>
<rect x="51" y="361" width="3" height="1"/>
<rect x="51" y="367" width="5" height="1"/>
<rect x="51" y="373" width="3" height="1"/>
<rect x="51" y="379" width="3" height="1"/>
<rect x="51" y="385" width="3" height="1"/>
<rect x="51" y="391" width="3" height="1"/>
<rect x="51" y="397" width="5" height="1"/>
<rect x="51" y="403" width="3" height="1"/>
<rect x="51" y="409" width="3" height="1"/>
<rect x="51" y="416" width="3" height="1"/>
<rect x="51" y="422" width="3" height="1"/>
<rect x="51" y="428" width="5" height="1"/>
<rect x="51" y="434" width="3" height="1"/>
<rect x="51" y="440" width="3" height="1"/>
<rect x="51" y="446" width="3" height="1"/>
<rect x="51" y="452" width="3" height="1"/>
<rect x="51" y="458" width="5" height="1"/>
<rect x="845" y="33" width="5" height="1"/>
<rect x="847" y="52" width="3" height="1"/>
<rect x="845" y="72" width="5" height="1"/>
<rect x="847" y="91" width="3" height="1"/>
<rect x="845" y="110" width="5" height="1"/>
<rect x="847" y="130" width="3" height="1"/>
<rect x="845" y="149" width="5" height="1"/>
<rect x="847" y="168" width="3" height="1"/>
<rect x="845" y="188" width="5" height="1"/>
<rect x="847" y="207" width="3" height="1"/>
<rect x="845" y="226" width="5" height="1"/>
<rect x="847" y="246" width="3" height="1"/>
<rect x="845" y="265" width="5" height="1"/>
<rect x="847" y="284" width="3" height="1"/>
<rect x="845" y="303" width="5" height="1"/>
<rect x="847" y="323" width="3" height="1"/>
<rect x="845" y="342" width="5" height="1"/>
<rect x="847" y="361" width="3" height="1"/>
<rect x="845" y="381" width="5" height="1"/>
<rect x="847" y="400" width="3" height="1"/>
<rect x="845" y="419" width="5" height="1"/>
<rect x="847" y="439" width="3" height="1"/>
<rect x="845" y="458" width="5" height="1"/>
<rect x="65" y="453" width="1" height="5"/>
<rect x="80" y="453" width="1" height="5"/>
<rect x="95" y="453" width="1" height="5"/>
<rect x="110" y="453" width="1" height="5"/>
<rect x="125" y="453" width="1" height="5"/>
<rect x="141" y="453" width="1" height="5"/>
<rect x="156" y="453" width="1" height="5"/>
<rect x="171" y="453" width="1" height="5"/>
<rect x="186" y="453" width="1" height="5"/>
<rect x="201" y="453" width="1" height="5"/>
<rect x="216" y="453" width="1" height="5"/>
<rect x="231" y="453" width="1" height="5"/>
<rect x="246" y="453" width="1" height="5"/>
<rect x="261" y="453" width="1" height="5"/>
<rect x="276" y="453" width="1" height="5"/>
<rect x="292" y="453" width="1" height="5"/>
<rect x="307" y="453" width="1" height="5"/>
<rect x="322" y="453" width="1" height="5"/>
<rect x="337" y="453" width="1" height="5"/>
<rect x="352" y="453" width="1" height="5"/>
<rect x="367" y="453" width="1" height="5"/>
<rect x="382" y="453" width="1" height="5"/>
<rect x="397" y="453" width="1" height="5"/>
<rect x="412" y="453" width="1" height="5"/>
<rect x="427" y="453" width="1" height="5"/>
<rect x="442" y="453" width="1" height="5"/>
<rect x="458" y="453" width="1" height="5"/>
<rect x="473" y="453" width="1" height="5"/>
<rect x="488" y="453" width="1" height="5"/>
<rect x="503" y="453" width="1" height="5"/>
<rect x="518" y="453" width="1" height="5"/>
<rect x="533" y="453" width="1" height="5"/>
<rect x="548" y="453" width="1" height="5"/>
<rect x="563" y="453" width="1" height="5"/>
<rect x="578" y="453" width="1" height="5"/>
<rect x="593" y="453" width="1" height="5"/>
<rect x="608" y="453" width="1" height="5"/>
<rect x="624" y="453" width="1" height="5"/>
<rect x="639" y="453" width="1" height="5"/>
<rect x="654" y="453" width="1" height="5"/>
<rect x="669" y="453" width="1" height="5"/>
<rect x="684" y="453" width="1" height="5"/>
<rect x="699" y="453" width="1" height="5"/>
<rect x="714" y="453" width="1" height="5"/>
<rect x="729" y="453" width="1" height="5"/>
<rect x="744" y="453" width="1" height="5"/>
<rect x="759" y="453" width="1" height="5"/>
<rect x="775" y="453" width="1" height="5"/>
<rect x="790" y="453" width="1" height="5"/>
<rect x="805" y="453" width="1" height="5"/>
<rect x="820" y="453" width="1" height="5"/>
<rect x="835" y="453" width="1" height="5"/>
</g>
<text class="ax" x="42.3" y="39" text-anchor="end">350000</text>
<text class="ax" x="42.3" y="68" text-anchor="end">300000</text>
<text class="ax" x="42.3" y="99" text-anchor="end">250000</text>
<text class="ax" x="42.3" y="129" text-anchor="end">200000</text>
<text class="ax" x="42.3" y="159" text-anchor="end">150000</text>
<text class="ax" x="42.3" y="190" text-anchor="end">100000</text>
<text class="ax" x="42.3" y="220" text-anchor="end">50000</text>
<text class="ax" x="42.3" y="251" text-anchor="end">0</text>
<text class="ax" x="42.3" y="281" text-anchor="end">−50000</text>
<text class="ax" x="42.3" y="311" text-anchor="end">−100000</text>
<text class="ax" x="42.3" y="342" text-anchor="end">−150000</text>
<text class="ax" x="42.3" y="372" text-anchor="end">−200000</text>
<text class="ax" x="42.3" y="402" text-anchor="end">−250000</text>
<text class="ax" x="42.3" y="433" text-anchor="end">−300000</text>
<text class="ax" x="42.3" y="463" text-anchor="end">−350000</text>
<text class="rx" x="856.5" y="39">600000</text>
<text class="rx" x="856.5" y="77">580000</text>
<text class="rx" x="856.5" y="115">560000</text>
<text class="rx" x="856.5" y="154">540000</text>
<text class="rx" x="856.5" y="193">520000</text>
<text class="rx" x="856.5" y="231">500000</text>
<text class="rx" x="856.5" y="270">480000</text>
<text class="rx" x="856.5" y="308">460000</text>
<text class="rx" x="856.5" y="347">440000</text>
<text class="rx" x="856.5" y="386">420000</text>
<text class="rx" x="856.5" y="424">400000</text>
<text class="rx" x="856.5" y="463">380000</text>
<text class="xl" text-anchor="end" transform="translate(56.50,470.00) rotate(-64)">08/09/16</text>
<text class="xl" text-anchor="end" transform="translate(71.47,470.00) rotate(-64)">08/16/16</text>
<text class="xl" text-anchor="end" transform="translate(86.44,470.00) rotate(-64)">08/23/16</text>
<text class="xl" text-anchor="end" transform="translate(101.41,470.00) rotate(-64)">08/30/16</text>
<text class="xl" text-anchor="end" transform="translate(116.38,470.00) rotate(-64)">09/06/16</text>
<text class="xl" text-anchor="end" transform="translate(131.35,470.00) rotate(-64)">09/13/16</text>
<text class="xl" text-anchor="end" transform="translate(147.32,470.00) rotate(-64)">09/20/16</text>
<text class="xl" text-anchor="end" transform="translate(162.29,470.00) rotate(-64)">09/27/16</text>
<text class="xl" text-anchor="end" transform="translate(177.26,470.00) rotate(-64)">10/04/16</text>
<text class="xl" text-anchor="end" transform="translate(192.23,470.00) rotate(-64)">10/11/16</text>
<text class="xl" text-anchor="end" transform="translate(207.20,470.00) rotate(-64)">10/18/16</text>
<text class="xl" text-anchor="end" transform="translate(222.17,470.00) rotate(-64)">10/25/16</text>
<text class="xl" text-anchor="end" transform="translate(237.14,470.00) rotate(-64)">11/01/16</text>
<text class="xl" text-anchor="end" transform="translate(252.11,470.00) rotate(-64)">11/08/16</text>
<text class="xl" text-anchor="end" transform="translate(267.08,470.00) rotate(-64)">11/15/16</text>
<text class="xl" text-anchor="end" transform="translate(282.05,470.00) rotate(-64)">11/22/16</text>
<text class="xl" text-anchor="end" transform="translate(298.02,470.00) rotate(-64)">11/29/16</text>
<text class="xl" text-anchor="end" transform="translate(312.99,470.00) rotate(-64)">12/06/16</text>
<text class="xl" text-anchor="end" transform="translate(327.96,470.00) rotate(-64)">12/13/16</text>
<text class="xl" text-anchor="end" transform="translate(342.93,470.00) rotate(-64)">12/20/16</text>
<text class="xl" text-anchor="end" transform="translate(357.90,470.00) rotate(-64)">12/27/16</text>
<text class="xl" text-anchor="end" transform="translate(372.87,470.00) rotate(-64)">01/03/17</text>
<text class="xl" text-anchor="end" transform="translate(387.84,470.00) rotate(-64)">01/10/17</text>
<text class="xl" text-anchor="end" transform="translate(402.81,470.00) rotate(-64)">01/17/17</text>
<text class="xl" text-anchor="end" transform="translate(417.78,470.00) rotate(-64)">01/24/17</text>
<text class="xl" text-anchor="end" transform="translate(432.75,470.00) rotate(-64)">01/31/17</text>
<text class="xl" text-anchor="end" transform="translate(447.72,470.00) rotate(-64)">02/07/17</text>
<text class="xl" text-anchor="end" transform="translate(463.69,470.00) rotate(-64)">02/14/17</text>
<text class="xl" text-anchor="end" transform="translate(478.66,470.00) rotate(-64)">02/21/17</text>
<text class="xl" text-anchor="end" transform="translate(493.63,470.00) rotate(-64)">02/28/17</text>
<text class="xl" text-anchor="end" transform="translate(508.60,470.00) rotate(-64)">03/07/17</text>
<text class="xl" text-anchor="end" transform="translate(523.57,470.00) rotate(-64)">03/14/17</text>
<text class="xl" text-anchor="end" transform="translate(538.54,470.00) rotate(-64)">03/21/17</text>
<text class="xl" text-anchor="end" transform="translate(553.51,470.00) rotate(-64)">03/28/17</text>
<text class="xl" text-anchor="end" transform="translate(568.48,470.00) rotate(-64)">04/04/17</text>
<text class="xl" text-anchor="end" transform="translate(583.45,470.00) rotate(-64)">04/11/17</text>
<text class="xl" text-anchor="end" transform="translate(598.42,470.00) rotate(-64)">04/18/17</text>
<text class="xl" text-anchor="end" transform="translate(613.39,470.00) rotate(-64)">04/25/17</text>
<text class="xl" text-anchor="end" transform="translate(629.36,470.00) rotate(-64)">05/02/17</text>
<text class="xl" text-anchor="end" transform="translate(644.33,470.00) rotate(-64)">05/09/17</text>
<text class="xl" text-anchor="end" transform="translate(659.30,470.00) rotate(-64)">05/16/17</text>
<text class="xl" text-anchor="end" transform="translate(674.27,470.00) rotate(-64)">05/23/17</text>
<text class="xl" text-anchor="end" transform="translate(689.24,470.00) rotate(-64)">05/30/17</text>
<text class="xl" text-anchor="end" transform="translate(704.21,470.00) rotate(-64)">06/06/17</text>
<text class="xl" text-anchor="end" transform="translate(719.18,470.00) rotate(-64)">06/13/17</text>
<text class="xl" text-anchor="end" transform="translate(734.15,470.00) rotate(-64)">06/20/17</text>
<text class="xl" text-anchor="end" transform="translate(749.12,470.00) rotate(-64)">06/27/17</text>
<text class="xl" text-anchor="end" transform="translate(764.09,470.00) rotate(-64)">07/03/17</text>
<text class="xl" text-anchor="end" transform="translate(780.06,470.00) rotate(-64)">07/11/17</text>
<text class="xl" text-anchor="end" transform="translate(795.03,470.00) rotate(-64)">07/18/17</text>
<text class="xl" text-anchor="end" transform="translate(810.00,470.00) rotate(-64)">07/25/17</text>
<text class="xl" text-anchor="end" transform="translate(824.97,470.00) rotate(-64)">08/01/17</text>
<text class="xl" text-anchor="end" transform="translate(839.94,470.00) rotate(-64)">08/08/17</text>
<text class="tt" transform="translate(0,6.9) scale(1.17,1)" xml:space="preserve"><tspan x="-1.81" letter-spacing="0.000">(</tspan><tspan x="3.21" letter-spacing="0.169">GC</tspan><tspan x="16.15" letter-spacing="0.000">,</tspan><tspan x="18.89" letter-spacing="0.923">comex</tspan><tspan x="51.80" letter-spacing="0.000">-</tspan><tspan x="55.22" letter-spacing="1.185">cec</tspan><tspan x="73.70" letter-spacing="0.000">)</tspan> <tspan x="80.82" letter-spacing="0.273">Gold</tspan><tspan x="101.62" letter-spacing="0.000">,</tspan><tspan x="104.32" letter-spacing="0.277">NY</tspan></text>
<text class="tt" transform="translate(0,16.8) scale(1.17,1)" xml:space="preserve"><tspan x="-1.23" letter-spacing="0.376">Net</tspan> <tspan x="19.53" letter-spacing="0.545">Commitments</tspan> <tspan x="91.20" letter-spacing="0.853">of</tspan> <tspan x="104.32" letter-spacing="0.554">Futures</tspan> <tspan x="146.35" letter-spacing="0.487">Traders</tspan></text>
<g class="ce">
<rect x="519" y="20" width="370" height="3" fill="#b4b4b4"/>
<rect x="517" y="0" width="372" height="20" fill="#000"/>
<rect x="518" y="1" width="370" height="18" fill="#d2d2d2"/>
<rect x="523" y="6" width="7" height="7" fill="#000"/>
<rect x="524" y="7" width="5" height="5" fill="#c1c1ff"/>
<rect x="611" y="6" width="7" height="7" fill="#000"/>
<rect x="612" y="7" width="5" height="5" fill="#ffffc8"/>
<rect x="699" y="6" width="7" height="7" fill="#000"/>
<rect x="700" y="7" width="5" height="5" fill="#8b2268"/>
<rect x="786" y="9" width="6" height="2" fill="#1a9a1a"/>
</g>
<text class="lg" x="536.5" y="13.5" textLength="60" lengthAdjust="spacingAndGlyphs">Large Spec</text>
<text class="lg" x="624.5" y="13.5" textLength="60" lengthAdjust="spacingAndGlyphs">Small Spec</text>
<text class="lg" x="712.5" y="13.5" textLength="60" lengthAdjust="spacingAndGlyphs">Commercial</text>
<text class="lg" x="800.5" y="13.5" textLength="78" lengthAdjust="spacingAndGlyphs">Open Interest</text>
<text class="ft" y="518" xml:space="preserve"><tspan x="161.76" textLength="43.90" lengthAdjust="spacingAndGlyphs">Charts</tspan> <tspan x="211.00" textLength="58.44" lengthAdjust="spacingAndGlyphs">compiled</tspan> <tspan x="273.85" textLength="15.73" lengthAdjust="spacingAndGlyphs">by</tspan> <tspan x="294.90" textLength="61.14" lengthAdjust="spacingAndGlyphs">Software</tspan> <tspan x="361.17" textLength="38.29" lengthAdjust="spacingAndGlyphs">North</tspan>  <tspan x="408.37" textLength="30.42" lengthAdjust="spacingAndGlyphs">http</tspan><tspan x="438.48" textLength="5.33" lengthAdjust="spacingAndGlyphs">:</tspan><tspan x="443.30" textLength="11.68" lengthAdjust="spacingAndGlyphs">//</tspan><tspan x="455.98" textLength="93.85" lengthAdjust="spacingAndGlyphs">cotpricecharts</tspan><tspan x="550.00" textLength="7.57" lengthAdjust="spacingAndGlyphs">.</tspan><tspan x="557.63" textLength="26.20" lengthAdjust="spacingAndGlyphs">com</tspan><tspan x="583.30" textLength="6.99" lengthAdjust="spacingAndGlyphs">/</tspan><tspan x="590.94" textLength="95.53" lengthAdjust="spacingAndGlyphs">commitments</tspan><tspan x="686.83" textLength="44.25" lengthAdjust="spacingAndGlyphs">current</tspan><tspan x="731.30" textLength="6.69" lengthAdjust="spacingAndGlyphs">/</tspan></text>
<text class="tb" y="540" xml:space="preserve"><tspan class="td" x="70.64 76.64 82.64">---</tspan> <tspan class="tm" x="95.69 101.69 107.69 113.69 119.69">Large</tspan> <tspan class="tm" x="131.69 137.69 143.69 149.69 155.69 161.69 167.69 173.69 179.69 185.69 191.69">Speculators</tspan> <tspan class="td" x="202.64 208.64 214.64">---</tspan>       <tspan class="td" x="262.64 268.64 274.64 280.64 286.64 292.64">------</tspan> <tspan class="tm" x="305.69 311.69 317.69 323.69 329.69 335.69 341.69 347.69 353.69 359.69">Commercial</tspan> <tspan class="td" x="370.64 376.64 382.64 388.64 394.64 400.64">------</tspan>         <tspan class="td" x="460.64 466.64">--</tspan> <tspan class="tm" x="479.69 485.69 491.69 497.69 503.69">Small</tspan> <tspan class="tm" x="515.69 521.69 527.69 533.69 539.69 545.69 551.69 557.69 563.69 569.69 575.69">Speculators</tspan> <tspan class="td" x="586.64 592.64">--</tspan>       <tspan class="tm" x="641.69 647.69 653.69 659.69">Open</tspan></text>
<text class="tb" y="553" xml:space="preserve"><tspan class="tm" x="71.69">#</tspan>      <tspan class="tm" x="113.69 119.69 125.69 131.69">Long</tspan>     <tspan class="tm" x="167.69 173.69 179.69 185.69 191.69">Short</tspan> <tspan class="tm" x="203.69 209.69 215.69 221.69 227.69 233.69 239.69">Bullish</tspan>   <tspan class="tm" x="263.69">#</tspan>      <tspan class="tm" x="305.69 311.69 317.69 323.69">Long</tspan>     <tspan class="tm" x="359.69 365.69 371.69 377.69 383.69">Short</tspan> <tspan class="tm" x="395.69 401.69 407.69 413.69 419.69 425.69 431.69">Bullish</tspan>      <tspan class="tm" x="473.69 479.69 485.69 491.69">Long</tspan>     <tspan class="tm" x="527.69 533.69 539.69 545.69 551.69">Short</tspan> <tspan class="tm" x="563.69 569.69 575.69 581.69 587.69 593.69 599.69">Bullish</tspan>   <tspan class="tm" x="623.69 629.69 635.69 641.69 647.69 653.69 659.69">Intrest</tspan></text>
<text class="tb" y="566" xml:space="preserve"><tspan class="tn" x="5.54 11.54 19.07 23.54 29.54 37.07 41.54 47.54">07/11/17</tspan> <tspan class="tn" x="59.54 65.54 71.54">355</tspan>   <tspan class="tn" x="95.54 101.54 107.54 115.07 119.54 125.54 131.54">217,637</tspan>   <tspan class="tn" x="155.54 161.54 167.54 175.07 179.54 185.54 191.54">157,377</tspan>  <tspan class="tn" x="209.54 215.54">58</tspan><tspan class="tm" x="221.69">%</tspan>    <tspan class="tn" x="251.54 257.54 263.54">108</tspan>   <tspan class="tn" x="287.54 293.54 299.54 307.07 311.54 317.54 323.54">147,818</tspan>   <tspan class="tn" x="347.54 353.54 359.54 367.07 371.54 377.54 383.54">221,734</tspan>  <tspan class="tn" x="401.54 407.54">40</tspan><tspan class="tm" x="413.69">%</tspan>        <tspan class="tn" x="467.54 473.54 479.54 485.54 491.54">45455</tspan>    <tspan class="tn" x="521.54 527.54 535.07 539.54 545.54 551.54">31,799</tspan>  <tspan class="tn" x="569.54 575.54">59</tspan><tspan class="tm" x="581.69">%</tspan>      <tspan class="tn" x="623.54 629.54 635.54 643.07 647.54 653.54 659.54">475,669</tspan></text>
<text class="tb" y="579" xml:space="preserve"><tspan class="tn" x="5.54 11.54 19.07 23.54 29.54 37.07 41.54 47.54">07/18/17</tspan> <tspan class="tn" x="59.54 65.54 71.54">359</tspan>   <tspan class="tn" x="95.54 101.54 107.54 115.07 119.54 125.54 131.54">217,232</tspan>   <tspan class="tn" x="155.54 161.54 167.54 175.07 179.54 185.54 191.54">157,094</tspan>  <tspan class="tn" x="209.54 215.54">58</tspan><tspan class="tm" x="221.69">%</tspan>    <tspan class="tn" x="251.54 257.54 263.54">108</tspan>   <tspan class="tn" x="287.54 293.54 299.54 307.07 311.54 317.54 323.54">153,064</tspan>   <tspan class="tn" x="347.54 353.54 359.54 367.07 371.54 377.54 383.54">226,699</tspan>  <tspan class="tn" x="401.54 407.54">40</tspan><tspan class="tm" x="413.69">%</tspan>        <tspan class="tn" x="467.54 473.54 479.54 485.54 491.54">44194</tspan>    <tspan class="tn" x="521.54 527.54 535.07 539.54 545.54 551.54">30,697</tspan>  <tspan class="tn" x="569.54 575.54">59</tspan><tspan class="tm" x="581.69">%</tspan>      <tspan class="tn" x="623.54 629.54 635.54 643.07 647.54 653.54 659.54">484,204</tspan></text>
<text class="tb" y="592" xml:space="preserve"><tspan class="tn" x="5.54 11.54 19.07 23.54 29.54 37.07 41.54 47.54">07/25/17</tspan> <tspan class="tn" x="59.54 65.54 71.54">336</tspan>   <tspan class="tn" x="95.54 101.54 107.54 115.07 119.54 125.54 131.54">220,299</tspan>   <tspan class="tn" x="155.54 161.54 167.54 175.07 179.54 185.54 191.54">129,468</tspan>  <tspan class="tn" x="209.54 215.54">63</tspan><tspan class="tm" x="221.69">%</tspan>    <tspan class="tn" x="251.54 257.54 263.54">109</tspan>   <tspan class="tn" x="287.54 293.54 299.54 307.07 311.54 317.54 323.54">148,926</tspan>   <tspan class="tn" x="347.54 353.54 359.54 367.07 371.54 377.54 383.54">252,269</tspan>  <tspan class="tn" x="401.54 407.54">37</tspan><tspan class="tm" x="413.69">%</tspan>        <tspan class="tn" x="467.54 473.54 479.54 485.54 491.54">43387</tspan>    <tspan class="tn" x="521.54 527.54 535.07 539.54 545.54 551.54">30,875</tspan>  <tspan class="tn" x="569.54 575.54">58</tspan><tspan class="tm" x="581.69">%</tspan>      <tspan class="tn" x="623.54 629.54 635.54 643.07 647.54 653.54 659.54">463,827</tspan></text>
<text class="tb" y="605" xml:space="preserve"><tspan class="tn" x="5.54 11.54 19.07 23.54 29.54 37.07 41.54 47.54">08/01/17</tspan> <tspan class="tn" x="59.54 65.54 71.54">333</tspan>   <tspan class="tn" x="95.54 101.54 107.54 115.07 119.54 125.54 131.54">239,766</tspan>   <tspan class="tn" x="155.54 161.54 167.54 175.07 179.54 185.54 191.54">110,094</tspan>  <tspan class="tn" x="209.54 215.54">69</tspan><tspan class="tm" x="221.69">%</tspan>    <tspan class="tn" x="251.54 257.54 263.54">107</tspan>   <tspan class="tn" x="287.54 293.54 299.54 307.07 311.54 317.54 323.54">126,891</tspan>   <tspan class="tn" x="347.54 353.54 359.54 367.07 371.54 377.54 383.54">270,276</tspan>  <tspan class="tn" x="401.54 407.54">32</tspan><tspan class="tm" x="413.69">%</tspan>        <tspan class="tn" x="467.54 473.54 479.54 485.54 491.54">42055</tspan>    <tspan class="tn" x="521.54 527.54 535.07 539.54 545.54 551.54">28,342</tspan>  <tspan class="tn" x="569.54 575.54">60</tspan><tspan class="tm" x="581.69">%</tspan>      <tspan class="tn" x="623.54 629.54 635.54 643.07 647.54 653.54 659.54">448,709</tspan></text>
<text class="tb" y="618" xml:space="preserve"><tspan class="tn" x="5.54 11.54 19.07 23.54 29.54 37.07 41.54 47.54">08/08/17</tspan> <tspan class="tn" x="59.54 65.54 71.54">325</tspan>   <tspan class="tn" x="95.54 101.54 107.54 115.07 119.54 125.54 131.54">246,377</tspan>    <tspan class="tn" x="161.54 167.54 175.07 179.54 185.54 191.54">97,540</tspan>  <tspan class="tn" x="209.54 215.54">72</tspan><tspan class="tm" x="221.69">%</tspan>    <tspan class="tn" x="251.54 257.54 263.54">113</tspan>   <tspan class="tn" x="287.54 293.54 299.54 307.07 311.54 317.54 323.54">125,168</tspan>   <tspan class="tn" x="347.54 353.54 359.54 367.07 371.54 377.54 383.54">284,679</tspan>  <tspan class="tn" x="401.54 407.54">31</tspan><tspan class="tm" x="413.69">%</tspan>        <tspan class="tn" x="467.54 473.54 479.54 485.54 491.54">40774</tspan>    <tspan class="tn" x="521.54 527.54 535.07 539.54 545.54 551.54">30,100</tspan>  <tspan class="tn" x="569.54 575.54">58</tspan><tspan class="tm" x="581.69">%</tspan>      <tspan class="tn" x="623.54 629.54 635.54 643.07 647.54 653.54 659.54">448,727</tspan></text>
</svg>
</body></html>
